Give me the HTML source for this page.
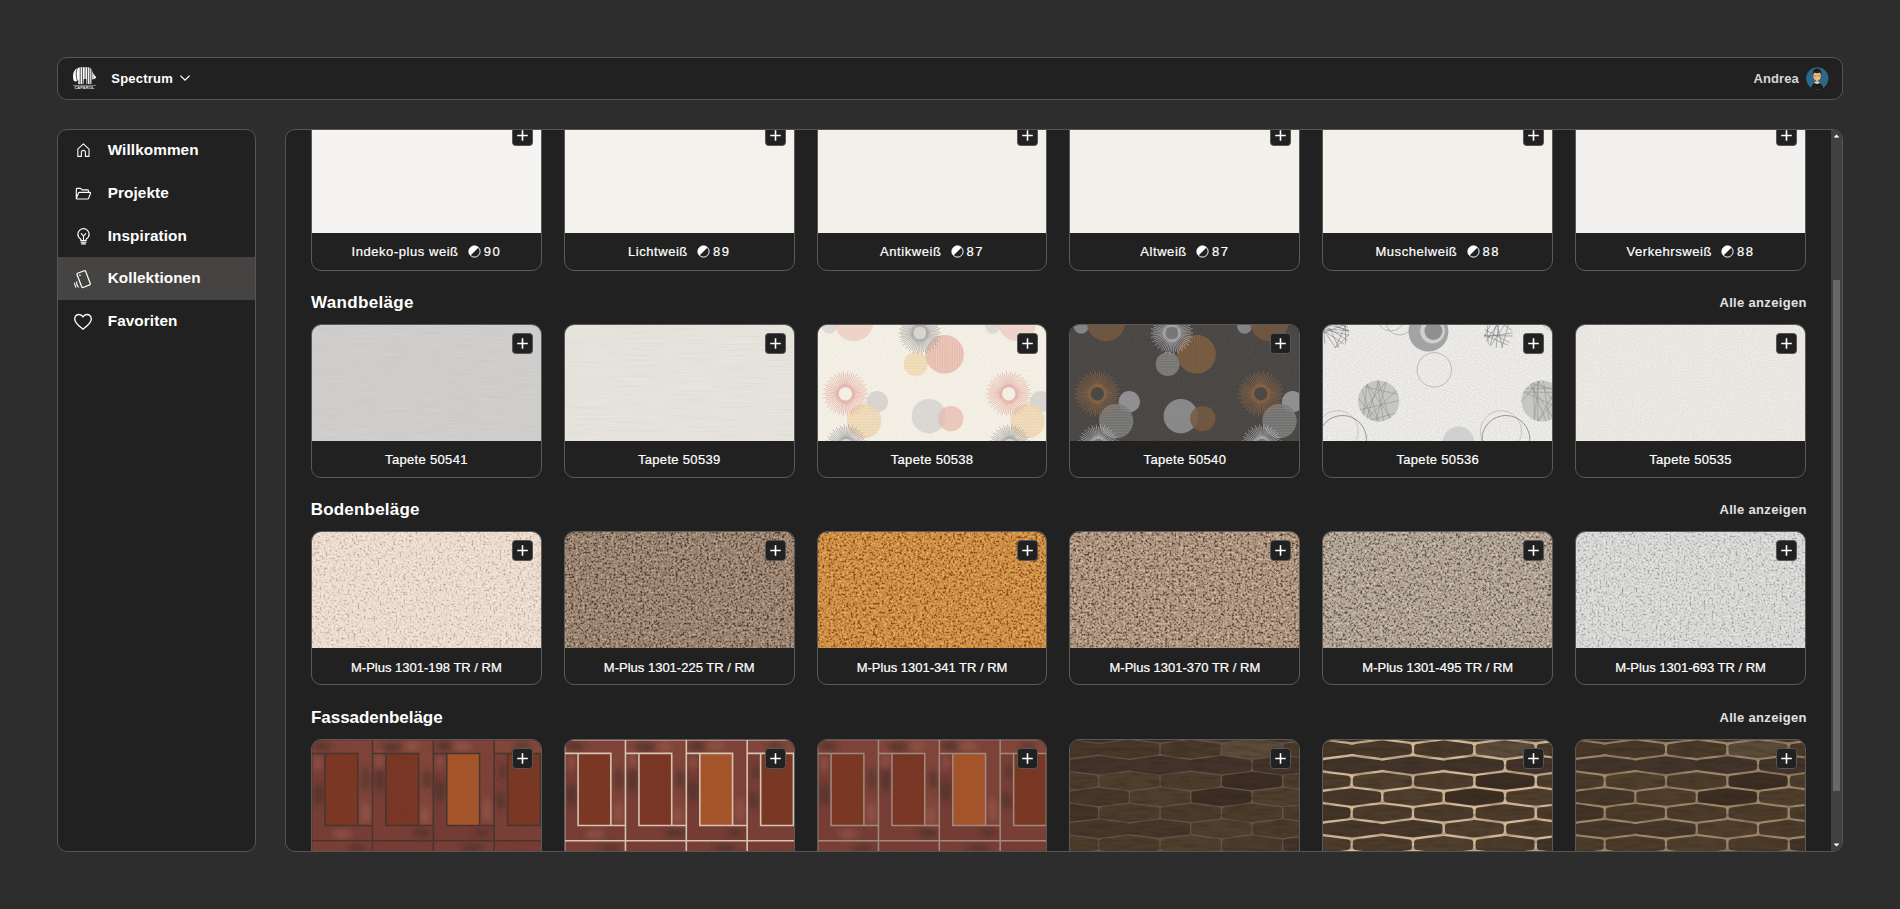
<!DOCTYPE html>
<html lang="de">
<head>
<meta charset="utf-8">
<title>Spectrum – Kollektionen</title>
<style>
html,body{margin:0;padding:0}
body{width:1900px;height:909px;overflow:hidden;background:#2d2d2d;font-family:"Liberation Sans",sans-serif;color:#fff;position:relative}
.panel{position:absolute;background:#212121;border:1px solid #555;border-radius:10px;box-sizing:border-box;overflow:hidden}
.abs{position:absolute;width:1900px;height:909px}
#hdr{left:57px;top:57px;width:1786px;height:43px}
#hdr .abs{left:-58px;top:-58px}
#side{left:57px;top:129px;width:199px;height:723px}
#side .abs{left:-58px;top:-130px}
#main{left:285px;top:129px;width:1558px;height:723px}
#main .abs{left:-286px;top:-130px}
.brand{position:absolute;left:111.3px;top:58px;height:41px;line-height:41px;font-size:13px;font-weight:bold;letter-spacing:.22px}
.chev{position:absolute;left:179px;top:74px}
.logo{position:absolute;left:72px;top:66px}
.user{position:absolute;left:1753.5px;top:58px;height:41px;line-height:41px;font-size:13px;font-weight:bold;color:#d6d6d6;letter-spacing:.1px}
.ava{position:absolute;left:1805.7px;top:66.5px}
.nav{position:absolute;left:58px;width:197px;height:42.65px;line-height:42.65px;font-size:15.3px;font-weight:bold}
.nav.sel{background:#454443;height:43.2px}
.nav span{position:absolute;left:49.7px;top:0;letter-spacing:.1px}
.nav svg{position:absolute;overflow:visible}
.sec{position:absolute;left:311px;width:1495px}
.hd{position:absolute;left:0;right:0;top:-33px;height:24px}
.hd .t{position:absolute;left:0;top:0;font-size:17px;font-weight:bold;line-height:24px;letter-spacing:.33px}
.r3 .hd .t{left:-.3px;letter-spacing:.2px}
.r4 .hd .t{letter-spacing:-.05px}
.hd .all{position:absolute;right:-.8px;top:-.4px;font-size:13px;font-weight:bold;line-height:24px;color:#e2e2e2;letter-spacing:.33px}
.cards{display:grid;grid-template-columns:repeat(6,1fr);column-gap:22px}
.card{height:154px;box-sizing:border-box;border:1px solid #5a5a5a;border-radius:10px;overflow:hidden;background:#212121;position:relative}
.card .img{height:116px;position:relative;overflow:hidden}
.card .fill{position:absolute;inset:0}
.card .tx{position:absolute;left:0;top:0;width:100%;height:100%;display:block}
.card .plus{position:absolute;right:8px;top:8px;width:21px;height:21px;box-sizing:border-box;border:1px solid #565656;background:#212121;border-radius:3.5px}
.card .plus svg{display:block}
.card .lbl{height:36px;line-height:36px;text-align:center;font-size:13px;white-space:nowrap;color:#fff;-webkit-text-stroke:.22px #fff}
.r1 .card{height:155px}
.r1 .lbl{height:37px;line-height:37.6px}
.r2 .lbl{line-height:37.2px}
.r3 .lbl{line-height:39px}
.lbl .lrv{vertical-align:-2.4px;margin:0 3px 0 9.2px}
.r1 .nm{letter-spacing:.55px}
.r1 .num{letter-spacing:1.5px}
.r2 .nm{letter-spacing:.32px}
.sb{position:absolute;left:1831px;top:130px;width:11px;height:721px;background:#424140}
.sb .th{position:absolute;left:2px;width:7px;top:150px;height:511px;background:#686868}
.sb svg{position:absolute;left:0}
</style>
</head>
<body>
<div id="hdr" class="panel"><div class="abs">
  <svg class="logo" width="26" height="24" viewBox="0 0 26 24"><defs><clipPath id="el"><path d="M1.6 14.6C.6 11 .8 6.500 3.200 3.800 5 1.800 7.500 1.300 10.500 1.300H16c2.500.2 4 2.200 4.600 5.200L24.300 11.400 22.800 12.800c-1.300.7-2.500.5-3.200.4L19.400 18.100H14.500L14.300 13H11.800L11.500 18.100H6.200L6.400 13.500C5.500 15.500 3.500 16.200 1.600 14.600Z"/></clipPath></defs><g clip-path="url(#el)"><rect x="0" y="0" width="26" height="19" fill="#fff"/><path d="M5.800 1.500C3.800 5 3.600 10 5.700 15.800M8.200 0v19M10.450 0v19M13.100 0v19M15.600 0v19M17.800 0v19M19.800 0v19" stroke="#212121" stroke-width=".8" fill="none"/><path d="M21.400 6.500v8" stroke="#212121" stroke-width=".5" opacity=".6"/></g><path d="M1 19.400h22.800" stroke="#ddd" stroke-width=".5"/><text x="12.400" y="23.100" font-family="Liberation Sans,sans-serif" font-weight="bold" font-size="3.900" text-anchor="middle" fill="#e8e8e8" letter-spacing=".15">CAPAROL</text></svg>
  <div class="brand">Spectrum</div>
  <svg class="chev" width="12" height="8" viewBox="0 0 12 8"><path d="M1.4 1.6 6 6.2l4.6-4.6" fill="none" stroke="#fff" stroke-width="1.3"/></svg>
  <div class="user">Andrea</div>
  <svg class="ava" width="23" height="23" viewBox="0 0 23 23"><defs><clipPath id="avc"><circle cx="11.300" cy="11.300" r="11.100"/></clipPath></defs><g clip-path="url(#avc)"><rect width="23" height="23" fill="#2f6789"/><g transform="translate(-.25 -1)"><path d="M5.300 23c0-4 2-6.300 6-6.300s6 2.300 6 6.300Z" fill="#231b15"/><path d="M9.400 15.800h3.800l.7 1.200-2.600 1-2.600-1Z" fill="#e9e6e2"/><rect x="10.100" y="12.500" width="2.400" height="4" fill="#e8a868"/><ellipse cx="11.300" cy="9.900" rx="3.700" ry="4.400" fill="#f1b878"/><path d="M7.100 9.300C6.300 5 8.300 2.600 11.300 2.600s5.100 2.300 4.300 6.600c-.5-1.600-1-2.300-1.500-2.600-1.800.7-3.900.7-5.500 0-.6.400-1.100 1.100-1.500 2.700Z" fill="#2a1c15"/><path d="M8.400 9.900h2.400M11.900 9.900h2.400" stroke="#8a7f77" stroke-width=".9"/></g></g></svg>
</div></div>
<div id="side" class="panel"><div class="abs">
  <div class="nav" style="top:128.8px"><svg style="left:18px;top:12.8px" width="15" height="16" viewBox="0 0 15 16"><path d="M1.8 7.1 7.4 1.800l5.6 5.300v7.3H9.400v-4.1a2 2 0 0 0-4 0v4.1H1.800Z" fill="none" stroke="#f2f2f2" stroke-width="1.15" stroke-linejoin="round"/></svg><span>Willkommen</span></div>
  <div class="nav" style="top:172.27px"><svg style="left:17px;top:15px" width="17" height="14" viewBox="0 0 17 14"><path d="M1.3 11.6V2.2a.9.9 0 0 1 .9-.9h3.3l1.5 1.6h5.6a.9.9 0 0 1 .9.9v1.6M1.3 11.6 3.5 6a.9.9 0 0 1 .85-.6h10.6a.6.6 0 0 1 .55.85L13.6 11.4a.9.9 0 0 1-.85.6H1.9a.6.6 0 0 1-.6-.4Z" fill="none" stroke="#fff" stroke-width="1.15" stroke-linejoin="round"/></svg><span>Projekte</span></div>
  <div class="nav" style="top:214.94px"><svg style="left:18px;top:12.5px" width="15" height="19" viewBox="0 0 15 19"><path d="M4.9 12.2C3 11.1 1.9 9.300 1.9 7.3a5.6 5.6 0 0 1 11.2 0c0 2-1.100 3.800-3 4.900v1.500H4.900Z" fill="none" stroke="#fff" stroke-width="1.2" stroke-linejoin="round"/><path d="M5.300 6.700 7.500 9.100l2.200-2.400M7.500 9.100v4.200M5 15.300h5M5.600 16.900h3.800" fill="none" stroke="#fff" stroke-width="1.1" stroke-linecap="round"/></svg><span>Inspiration</span></div>
  <div class="nav sel" style="top:256.6px"><svg style="left:15px;top:12px" width="20" height="21" viewBox="0 0 20 21"><g transform="rotate(-21 10.5 10.5)"><rect x="6.200" y="2.600" width="9.200" height="15.200" rx="1.100" fill="none" stroke="#fff" stroke-width="1.25"/><circle cx="8.700" cy="5.300" r=".8" fill="#fff"/></g><path d="M3.600 12.800c-.2 2 .4 3.900 1.700 5.300M1.700 14c-.1 1.500.3 2.900 1.100 4.100" fill="none" stroke="#fff" stroke-width="1.050" stroke-linecap="round"/></svg><span>Kollektionen</span></div>
  <div class="nav" style="top:300.28px"><svg style="left:15px;top:13px" width="20" height="18" viewBox="0 0 20 18"><path d="M10 16.200C7.400 14 1.700 10.300 1.700 5.900A4.300 4.300 0 0 1 6 1.500c1.700 0 3.100.9 4 2.400.9-1.500 2.300-2.400 4-2.400a4.300 4.300 0 0 1 4.300 4.400c0 4.400-5.700 8.100-8.300 10.300Z" fill="none" stroke="#fff" stroke-width="1.350" stroke-linejoin="round"/></svg><span>Favoriten</span></div>
</div></div>
<div id="main" class="panel"><div class="abs">
<div class="sec r1" style="top:116px"><div class="cards"><div class="card "><div class="img"><div class="fill" style="background:#f5f4f2"></div><div class="plus"><svg width="19" height="19" viewBox="0 0 19 19"><path d="M9.5 4.2v10.6M4.2 9.5h10.600" stroke="#fff" stroke-width="1.600" fill="none"/></svg></div></div><div class="lbl"><span class="nm">Indeko-plus weiß</span><svg class="lrv" width="13" height="13" viewBox="0 0 13 13"><circle cx="6.5" cy="6.5" r="5.600" fill="none" stroke="#fff" stroke-width="1"/><path d="M2.500 10.500A5.600 5.600 0 0 1 10.500 2.500Z" fill="#fff"/></svg><span class="num">90</span></div></div><div class="card "><div class="img"><div class="fill" style="background:#f5f2ed"></div><div class="plus"><svg width="19" height="19" viewBox="0 0 19 19"><path d="M9.5 4.2v10.6M4.2 9.5h10.600" stroke="#fff" stroke-width="1.600" fill="none"/></svg></div></div><div class="lbl"><span class="nm">Lichtweiß</span><svg class="lrv" width="13" height="13" viewBox="0 0 13 13"><circle cx="6.5" cy="6.5" r="5.600" fill="none" stroke="#fff" stroke-width="1"/><path d="M2.500 10.500A5.600 5.600 0 0 1 10.500 2.500Z" fill="#fff"/></svg><span class="num">89</span></div></div><div class="card "><div class="img"><div class="fill" style="background:#f3efe9"></div><div class="plus"><svg width="19" height="19" viewBox="0 0 19 19"><path d="M9.5 4.2v10.6M4.2 9.5h10.600" stroke="#fff" stroke-width="1.600" fill="none"/></svg></div></div><div class="lbl"><span class="nm">Antikweiß</span><svg class="lrv" width="13" height="13" viewBox="0 0 13 13"><circle cx="6.5" cy="6.5" r="5.600" fill="none" stroke="#fff" stroke-width="1"/><path d="M2.500 10.500A5.600 5.600 0 0 1 10.500 2.500Z" fill="#fff"/></svg><span class="num">87</span></div></div><div class="card "><div class="img"><div class="fill" style="background:#f3efe9"></div><div class="plus"><svg width="19" height="19" viewBox="0 0 19 19"><path d="M9.5 4.2v10.6M4.2 9.5h10.600" stroke="#fff" stroke-width="1.600" fill="none"/></svg></div></div><div class="lbl"><span class="nm">Altweiß</span><svg class="lrv" width="13" height="13" viewBox="0 0 13 13"><circle cx="6.5" cy="6.5" r="5.600" fill="none" stroke="#fff" stroke-width="1"/><path d="M2.500 10.500A5.600 5.600 0 0 1 10.500 2.500Z" fill="#fff"/></svg><span class="num">87</span></div></div><div class="card "><div class="img"><div class="fill" style="background:#f3f0ea"></div><div class="plus"><svg width="19" height="19" viewBox="0 0 19 19"><path d="M9.5 4.2v10.6M4.2 9.5h10.600" stroke="#fff" stroke-width="1.600" fill="none"/></svg></div></div><div class="lbl"><span class="nm">Muschelweiß</span><svg class="lrv" width="13" height="13" viewBox="0 0 13 13"><circle cx="6.5" cy="6.5" r="5.600" fill="none" stroke="#fff" stroke-width="1"/><path d="M2.500 10.500A5.600 5.600 0 0 1 10.500 2.500Z" fill="#fff"/></svg><span class="num">88</span></div></div><div class="card "><div class="img"><div class="fill" style="background:#f1f0ee"></div><div class="plus"><svg width="19" height="19" viewBox="0 0 19 19"><path d="M9.5 4.2v10.6M4.2 9.5h10.600" stroke="#fff" stroke-width="1.600" fill="none"/></svg></div></div><div class="lbl"><span class="nm">Verkehrsweiß</span><svg class="lrv" width="13" height="13" viewBox="0 0 13 13"><circle cx="6.5" cy="6.5" r="5.600" fill="none" stroke="#fff" stroke-width="1"/><path d="M2.500 10.500A5.600 5.600 0 0 1 10.500 2.500Z" fill="#fff"/></svg><span class="num">88</span></div></div></div></div>
<div class="sec r2" style="top:324px"><div class="hd"><span class="t">Wandbeläge</span><span class="all">Alle anzeigen</span></div><div class="cards"><div class="card "><div class="img"><svg class="tx" viewBox="0 0 229 116" preserveAspectRatio="none"><defs><filter id="w1" x="0" y="0" width="100%" height="100%" color-interpolation-filters="sRGB"><feTurbulence type="fractalNoise" baseFrequency="0.03 0.9" numOctaves="2" seed="4"/><feColorMatrix type="matrix" values="1 0 0 0 0 1 0 0 0 0 1 0 0 0 0 0 0 0 0 1"/><feComponentTransfer><feFuncR type="table" tableValues="0.796 0.796 0.796 0.796 0.797 0.799 0.802 0.806 0.809 0.811 0.812 0.812 0.814 0.816 0.819 0.821 0.823 0.824 0.824 0.824 0.824"/><feFuncG type="table" tableValues="0.792 0.792 0.792 0.792 0.793 0.795 0.798 0.802 0.805 0.807 0.808 0.808 0.810 0.812 0.815 0.817 0.819 0.820 0.820 0.820 0.820"/><feFuncB type="table" tableValues="0.784 0.784 0.784 0.784 0.785 0.787 0.790 0.794 0.797 0.799 0.800 0.801 0.802 0.805 0.807 0.809 0.811 0.812 0.812 0.812 0.812"/></feComponentTransfer></filter></defs><rect width="229" height="116" filter="url(#w1)"/></svg><div class="plus"><svg width="19" height="19" viewBox="0 0 19 19"><path d="M9.5 4.2v10.6M4.2 9.5h10.600" stroke="#fff" stroke-width="1.600" fill="none"/></svg></div></div><div class="lbl"><span class="nm">Tapete 50541</span></div></div><div class="card "><div class="img"><svg class="tx" viewBox="0 0 229 116" preserveAspectRatio="none"><defs><filter id="w2" x="0" y="0" width="100%" height="100%" color-interpolation-filters="sRGB"><feTurbulence type="fractalNoise" baseFrequency="0.02 0.8" numOctaves="2" seed="7"/><feColorMatrix type="matrix" values="1 0 0 0 0 1 0 0 0 0 1 0 0 0 0 0 0 0 0 1"/><feComponentTransfer><feFuncR type="table" tableValues="0.882 0.882 0.882 0.882 0.883 0.886 0.890 0.894 0.898 0.901 0.902 0.903 0.904 0.907 0.909 0.911 0.913 0.914 0.914 0.914 0.914"/><feFuncG type="table" tableValues="0.867 0.867 0.867 0.867 0.868 0.871 0.874 0.879 0.882 0.885 0.886 0.887 0.889 0.892 0.896 0.899 0.901 0.902 0.902 0.902 0.902"/><feFuncB type="table" tableValues="0.839 0.839 0.839 0.839 0.841 0.844 0.848 0.853 0.858 0.861 0.863 0.864 0.866 0.869 0.872 0.875 0.878 0.878 0.878 0.878 0.878"/></feComponentTransfer></filter></defs><rect width="229" height="116" filter="url(#w2)"/></svg><div class="plus"><svg width="19" height="19" viewBox="0 0 19 19"><path d="M9.5 4.2v10.6M4.2 9.5h10.600" stroke="#fff" stroke-width="1.600" fill="none"/></svg></div></div><div class="lbl"><span class="nm">Tapete 50539</span></div></div><div class="card "><div class="img"><svg class="tx" viewBox="0 0 229 116" preserveAspectRatio="none"><defs><pattern id="sbav" width="1.7" height="4" patternUnits="userSpaceOnUse"><rect width=".55" height="4" fill="#d99a88"/></pattern><pattern id="sbah" width="4" height="1.6" patternUnits="userSpaceOnUse"><rect width="4" height=".5" fill="#e3c08a"/></pattern><filter id="w3" x="0" y="0" width="100%" height="100%" color-interpolation-filters="sRGB"><feTurbulence type="fractalNoise" baseFrequency="0.5 0.9" numOctaves="1" seed="2"/><feColorMatrix type="matrix" values="1 0 0 0 0 1 0 0 0 0 1 0 0 0 0 0 0 0 0 1"/><feComponentTransfer><feFuncR type="table" tableValues="0.933 0.933 0.933 0.933 0.933 0.935 0.938 0.943 0.948 0.951 0.953 0.954 0.957 0.961 0.965 0.967 0.969 0.969 0.969 0.969 0.969"/><feFuncG type="table" tableValues="0.914 0.914 0.914 0.914 0.914 0.915 0.920 0.925 0.931 0.936 0.937 0.939 0.942 0.947 0.952 0.955 0.957 0.957 0.957 0.957 0.957"/><feFuncB type="table" tableValues="0.867 0.867 0.867 0.867 0.867 0.869 0.874 0.880 0.887 0.892 0.894 0.896 0.900 0.906 0.912 0.916 0.918 0.918 0.918 0.918 0.918"/></feComponentTransfer></filter></defs><rect width="229" height="116" filter="url(#w3)"/><circle cx="11.2" cy="1.2" r="7.5" fill="#d9d5d2" opacity="0.85"/><circle cx="35.9" cy="-3.1" r="19.3" fill="#ebc8bd" opacity="0.7"/><circle cx="97.8" cy="38.9" r="12" fill="#f1dcb8" opacity="0.8"/><circle cx="97.8" cy="38.9" r="12" fill="url(#sbah)" opacity=".5"/><circle cx="126.7" cy="29.3" r="19.3" fill="#e8bbac" opacity="0.7"/><circle cx="126.7" cy="29.3" r="19.3" fill="url(#sbav)" opacity=".55"/><g opacity="0.9"><circle cx="101.9" cy="8" r="9.5" fill="#8a8b92" opacity=".3"/><path d="M108.1 8.0L123.2 8.0M108.1 8.6L121.0 10.0M108.0 9.3L122.7 12.4M107.8 9.9L120.1 13.9M107.6 10.5L121.4 16.7M107.3 11.1L118.5 17.6M106.9 11.6L119.1 20.5M106.5 12.1L116.1 20.8M106.0 12.6L116.2 23.8M105.5 13.0L113.2 23.5M105.0 13.4L112.6 26.4M104.4 13.7L109.7 25.5M103.8 13.9L108.5 28.3M103.2 14.1L105.9 26.8M102.5 14.2L104.1 29.2M101.9 14.2L101.9 27.2M101.3 14.2L99.7 29.2M100.6 14.1L97.9 26.8M100.0 13.9L95.3 28.3M99.4 13.7L94.1 25.5M98.8 13.4L91.3 26.4M98.3 13.0L90.6 23.5M97.8 12.6L87.6 23.8M97.3 12.1L87.7 20.8M96.9 11.6L84.7 20.5M96.5 11.1L85.3 17.6M96.2 10.5L82.4 16.7M96.0 9.9L83.7 13.9M95.8 9.3L81.1 12.4M95.7 8.6L82.8 10.0M95.7 8.0L80.6 8.0M95.7 7.4L82.8 6.0M95.8 6.7L81.1 3.6M96.0 6.1L83.7 2.1M96.2 5.5L82.4 -0.7M96.5 4.9L85.3 -1.6M96.9 4.4L84.7 -4.5M97.3 3.9L87.7 -4.8M97.8 3.4L87.6 -7.8M98.3 3.0L90.6 -7.5M98.8 2.6L91.2 -10.4M99.4 2.3L94.1 -9.5M100.0 2.1L95.3 -12.3M100.6 1.9L97.9 -10.8M101.3 1.8L99.7 -13.2M101.9 1.8L101.9 -11.2M102.5 1.8L104.1 -13.2M103.2 1.9L105.9 -10.8M103.8 2.1L108.5 -12.3M104.4 2.3L109.7 -9.5M105.0 2.6L112.6 -10.4M105.5 3.0L113.2 -7.5M106.0 3.4L116.2 -7.8M106.5 3.9L116.1 -4.8M106.9 4.4L119.1 -4.5M107.3 4.9L118.5 -1.6M107.6 5.5L121.4 -0.7M107.8 6.1L120.1 2.1M108.0 6.7L122.7 3.6M108.1 7.4L121.0 6.0" stroke="#8a8b92" stroke-width=".58" fill="none"/></g><circle cx="101.9" cy="8" r="6.2" fill="#d8d4d0"/><circle cx="59.3" cy="76.7" r="10.7" fill="#d3cfcc" opacity="0.85"/><circle cx="46.2" cy="96" r="17.2" fill="#f0d9b8" opacity="0.8"/><circle cx="46.2" cy="96" r="17.2" fill="url(#sbah)" opacity=".5"/><g opacity="0.9"><circle cx="27.4" cy="68.8" r="9.9" fill="#df958d" opacity=".3"/><path d="M34.0 68.8L50.1 68.8M34.0 69.5L47.7 70.9M33.9 70.2L49.6 73.5M33.7 70.8L46.8 75.1M33.4 71.5L48.1 78.0M33.1 72.1L45.1 79.0M32.7 72.7L45.8 82.1M32.3 73.2L42.6 82.5M31.8 73.7L42.6 85.7M31.3 74.1L39.4 85.3M30.7 74.5L38.8 88.5M30.1 74.8L35.7 87.5M29.4 75.1L34.4 90.4M28.8 75.3L31.6 88.8M28.1 75.4L29.8 91.4M27.4 75.4L27.4 89.2M26.7 75.4L25.0 91.4M26.0 75.3L23.2 88.8M25.4 75.1L20.4 90.4M24.7 74.8L19.1 87.5M24.1 74.5L16.1 88.5M23.5 74.1L15.4 85.3M23.0 73.7L12.2 85.7M22.5 73.2L12.2 82.5M22.1 72.7L9.0 82.1M21.7 72.1L9.7 79.0M21.4 71.5L6.7 78.0M21.1 70.8L8.0 75.1M20.9 70.2L5.2 73.5M20.8 69.5L7.1 70.9M20.8 68.8L4.7 68.8M20.8 68.1L7.1 66.7M20.9 67.4L5.2 64.1M21.1 66.8L8.0 62.5M21.4 66.1L6.7 59.6M21.7 65.5L9.7 58.6M22.1 64.9L9.0 55.5M22.5 64.4L12.2 55.1M23.0 63.9L12.2 51.9M23.5 63.5L15.4 52.3M24.1 63.1L16.0 49.1M24.7 62.8L19.1 50.1M25.4 62.5L20.4 47.2M26.0 62.3L23.2 48.8M26.7 62.2L25.0 46.2M27.4 62.2L27.4 48.4M28.1 62.2L29.8 46.2M28.8 62.3L31.6 48.8M29.4 62.5L34.4 47.2M30.1 62.8L35.7 50.1M30.7 63.1L38.8 49.1M31.3 63.5L39.4 52.3M31.8 63.9L42.6 51.9M32.3 64.4L42.6 55.1M32.7 64.9L45.8 55.5M33.1 65.5L45.1 58.6M33.4 66.1L48.1 59.6M33.7 66.8L46.8 62.5M33.9 67.4L49.6 64.1M34.0 68.1L47.7 66.7" stroke="#df958d" stroke-width=".58" fill="none"/></g><circle cx="27.4" cy="68.8" r="6.6" fill="#f3efe4"/><circle cx="110.9" cy="91.2" r="17.2" fill="#d6d2cf" opacity="0.85"/><circle cx="132.9" cy="93.6" r="12.7" fill="#e7b8aa" opacity="0.7"/><g opacity="0.9"><circle cx="28.4" cy="120" r="9.3" fill="#8a8b92" opacity=".3"/><path d="M34.4 120.0L49.0 120.0M34.4 120.6L46.8 121.9M34.3 121.2L48.5 124.3M34.1 121.9L46.0 125.7M33.9 122.4L47.2 128.4M33.6 123.0L44.5 129.3M33.3 123.5L45.1 132.1M32.9 124.0L42.2 132.4M32.4 124.5L42.2 135.3M31.9 124.9L39.3 135.0M31.4 125.2L38.7 137.8M30.8 125.5L35.9 136.9M30.3 125.7L34.8 139.6M29.6 125.9L32.3 138.1M29.0 126.0L30.6 140.5M28.4 126.0L28.4 138.5M27.8 126.0L26.2 140.5M27.2 125.9L24.5 138.1M26.5 125.7L22.0 139.6M26.0 125.5L20.9 136.9M25.4 125.2L18.1 137.8M24.9 124.9L17.5 135.0M24.4 124.5L14.6 135.3M23.9 124.0L14.6 132.4M23.5 123.5L11.7 132.1M23.2 123.0L12.3 129.3M22.9 122.4L9.6 128.4M22.7 121.9L10.8 125.7M22.5 121.2L8.3 124.3M22.4 120.6L10.0 121.9M22.4 120.0L7.8 120.0M22.4 119.4L10.0 118.1M22.5 118.8L8.3 115.7M22.7 118.1L10.8 114.3M22.9 117.6L9.6 111.6M23.2 117.0L12.3 110.7M23.5 116.5L11.7 107.9M23.9 116.0L14.6 107.6M24.4 115.5L14.6 104.7M24.9 115.1L17.5 105.0M25.4 114.8L18.1 102.2M26.0 114.5L20.9 103.1M26.5 114.3L22.0 100.4M27.2 114.1L24.5 101.9M27.8 114.0L26.2 99.5M28.4 114.0L28.4 101.5M29.0 114.0L30.6 99.5M29.6 114.1L32.3 101.9M30.3 114.3L34.8 100.4M30.8 114.5L35.9 103.1M31.4 114.8L38.7 102.2M31.9 115.1L39.3 105.0M32.4 115.5L42.2 104.7M32.9 116.0L42.2 107.6M33.3 116.5L45.1 107.9M33.6 117.0L44.5 110.7M33.9 117.6L47.2 111.6M34.1 118.1L46.0 114.3M34.3 118.8L48.5 115.7M34.4 119.4L46.8 118.1" stroke="#8a8b92" stroke-width=".58" fill="none"/></g><circle cx="28.4" cy="120" r="6.0" fill="#d8d4d0"/><circle cx="174.7" cy="1.2" r="7.5" fill="#d9d5d2" opacity="0.85"/><circle cx="199.4" cy="-3.1" r="19.3" fill="#ebc8bd" opacity="0.7"/><circle cx="261.3" cy="38.9" r="12" fill="#f1dcb8" opacity="0.8"/><circle cx="261.3" cy="38.9" r="12" fill="url(#sbah)" opacity=".5"/><circle cx="290.2" cy="29.3" r="19.3" fill="#e8bbac" opacity="0.7"/><circle cx="290.2" cy="29.3" r="19.3" fill="url(#sbav)" opacity=".55"/><g opacity="0.9"><circle cx="265.4" cy="8" r="9.5" fill="#8a8b92" opacity=".3"/><path d="M271.6 8.0L286.7 8.0M271.6 8.6L284.5 10.0M271.5 9.3L286.2 12.4M271.3 9.9L283.6 13.9M271.1 10.5L284.9 16.7M270.8 11.1L282.0 17.6M270.4 11.6L282.6 20.5M270.0 12.1L279.6 20.8M269.5 12.6L279.7 23.8M269.0 13.0L276.7 23.5M268.5 13.4L276.0 26.4M267.9 13.7L273.2 25.5M267.3 13.9L272.0 28.3M266.7 14.1L269.4 26.8M266.0 14.2L267.6 29.2M265.4 14.2L265.4 27.2M264.8 14.2L263.2 29.2M264.1 14.1L261.4 26.8M263.5 13.9L258.8 28.3M262.9 13.7L257.6 25.5M262.3 13.4L254.7 26.4M261.8 13.0L254.1 23.5M261.3 12.6L251.1 23.8M260.8 12.1L251.2 20.8M260.4 11.6L248.2 20.5M260.0 11.1L248.8 17.6M259.7 10.5L245.9 16.7M259.5 9.9L247.2 13.9M259.3 9.3L244.6 12.4M259.2 8.6L246.3 10.0M259.2 8.0L244.1 8.0M259.2 7.4L246.3 6.0M259.3 6.7L244.6 3.6M259.5 6.1L247.2 2.1M259.7 5.5L245.9 -0.7M260.0 4.9L248.8 -1.6M260.4 4.4L248.2 -4.5M260.8 3.9L251.2 -4.8M261.3 3.4L251.1 -7.8M261.8 3.0L254.1 -7.5M262.3 2.6L254.7 -10.4M262.9 2.3L257.6 -9.5M263.5 2.1L258.8 -12.3M264.1 1.9L261.4 -10.8M264.8 1.8L263.2 -13.2M265.4 1.8L265.4 -11.2M266.0 1.8L267.6 -13.2M266.7 1.9L269.4 -10.8M267.3 2.1L272.0 -12.3M267.9 2.3L273.2 -9.5M268.5 2.6L276.0 -10.4M269.0 3.0L276.7 -7.5M269.5 3.4L279.7 -7.8M270.0 3.9L279.6 -4.8M270.4 4.4L282.6 -4.5M270.8 4.9L282.0 -1.6M271.1 5.5L284.9 -0.7M271.3 6.1L283.6 2.1M271.5 6.7L286.2 3.6M271.6 7.4L284.5 6.0" stroke="#8a8b92" stroke-width=".58" fill="none"/></g><circle cx="265.4" cy="8" r="6.2" fill="#d8d4d0"/><circle cx="222.8" cy="76.7" r="10.7" fill="#d3cfcc" opacity="0.85"/><circle cx="209.7" cy="96" r="17.2" fill="#f0d9b8" opacity="0.8"/><circle cx="209.7" cy="96" r="17.2" fill="url(#sbah)" opacity=".5"/><g opacity="0.9"><circle cx="190.9" cy="68.8" r="9.9" fill="#df958d" opacity=".3"/><path d="M197.5 68.8L213.6 68.8M197.5 69.5L211.2 70.9M197.4 70.2L213.1 73.5M197.2 70.8L210.3 75.1M196.9 71.5L211.6 78.0M196.6 72.1L208.6 79.0M196.2 72.7L209.3 82.1M195.8 73.2L206.1 82.5M195.3 73.7L206.1 85.7M194.8 74.1L202.9 85.3M194.2 74.5L202.2 88.5M193.6 74.8L199.2 87.5M192.9 75.1L197.9 90.4M192.3 75.3L195.1 88.8M191.6 75.4L193.3 91.4M190.9 75.4L190.9 89.2M190.2 75.4L188.5 91.4M189.5 75.3L186.7 88.8M188.9 75.1L183.9 90.4M188.2 74.8L182.6 87.5M187.6 74.5L179.6 88.5M187.0 74.1L178.9 85.3M186.5 73.7L175.7 85.7M186.0 73.2L175.7 82.5M185.6 72.7L172.5 82.1M185.2 72.1L173.2 79.0M184.9 71.5L170.2 78.0M184.6 70.8L171.5 75.1M184.4 70.2L168.7 73.5M184.3 69.5L170.6 70.9M184.3 68.8L168.2 68.8M184.3 68.1L170.6 66.7M184.4 67.4L168.7 64.1M184.6 66.8L171.5 62.5M184.9 66.1L170.2 59.6M185.2 65.5L173.2 58.6M185.6 64.9L172.5 55.5M186.0 64.4L175.7 55.1M186.5 63.9L175.7 51.9M187.0 63.5L178.9 52.3M187.6 63.1L179.5 49.1M188.2 62.8L182.6 50.1M188.9 62.5L183.9 47.2M189.5 62.3L186.7 48.8M190.2 62.2L188.5 46.2M190.9 62.2L190.9 48.4M191.6 62.2L193.3 46.2M192.3 62.3L195.1 48.8M192.9 62.5L197.9 47.2M193.6 62.8L199.2 50.1M194.2 63.1L202.2 49.1M194.8 63.5L202.9 52.3M195.3 63.9L206.1 51.9M195.8 64.4L206.1 55.1M196.2 64.9L209.3 55.5M196.6 65.5L208.6 58.6M196.9 66.1L211.6 59.6M197.2 66.8L210.3 62.5M197.4 67.4L213.1 64.1M197.5 68.1L211.2 66.7" stroke="#df958d" stroke-width=".58" fill="none"/></g><circle cx="190.9" cy="68.8" r="6.6" fill="#f3efe4"/><circle cx="274.4" cy="91.2" r="17.2" fill="#d6d2cf" opacity="0.85"/><circle cx="296.4" cy="93.6" r="12.7" fill="#e7b8aa" opacity="0.7"/><g opacity="0.9"><circle cx="191.9" cy="120" r="9.3" fill="#8a8b92" opacity=".3"/><path d="M197.9 120.0L212.5 120.0M197.9 120.6L210.3 121.9M197.8 121.2L212.0 124.3M197.6 121.9L209.5 125.7M197.4 122.4L210.7 128.4M197.1 123.0L208.0 129.3M196.8 123.5L208.6 132.1M196.4 124.0L205.7 132.4M195.9 124.5L205.7 135.3M195.4 124.9L202.8 135.0M194.9 125.2L202.2 137.8M194.3 125.5L199.4 136.9M193.8 125.7L198.3 139.6M193.1 125.9L195.8 138.1M192.5 126.0L194.1 140.5M191.9 126.0L191.9 138.5M191.3 126.0L189.7 140.5M190.7 125.9L188.0 138.1M190.0 125.7L185.5 139.6M189.5 125.5L184.4 136.9M188.9 125.2L181.6 137.8M188.4 124.9L181.0 135.0M187.9 124.5L178.1 135.3M187.4 124.0L178.1 132.4M187.0 123.5L175.2 132.1M186.7 123.0L175.8 129.3M186.4 122.4L173.1 128.4M186.2 121.9L174.3 125.7M186.0 121.2L171.8 124.3M185.9 120.6L173.5 121.9M185.9 120.0L171.3 120.0M185.9 119.4L173.5 118.1M186.0 118.8L171.8 115.7M186.2 118.1L174.3 114.3M186.4 117.6L173.1 111.6M186.7 117.0L175.8 110.7M187.0 116.5L175.2 107.9M187.4 116.0L178.1 107.6M187.9 115.5L178.1 104.7M188.4 115.1L181.0 105.0M188.9 114.8L181.6 102.2M189.5 114.5L184.4 103.1M190.0 114.3L185.5 100.4M190.7 114.1L188.0 101.9M191.3 114.0L189.7 99.5M191.9 114.0L191.9 101.5M192.5 114.0L194.1 99.5M193.1 114.1L195.8 101.9M193.8 114.3L198.3 100.4M194.3 114.5L199.4 103.1M194.9 114.8L202.2 102.2M195.4 115.1L202.8 105.0M195.9 115.5L205.7 104.7M196.4 116.0L205.7 107.6M196.8 116.5L208.6 107.9M197.1 117.0L208.0 110.7M197.4 117.6L210.7 111.6M197.6 118.1L209.5 114.3M197.8 118.8L212.0 115.7M197.9 119.4L210.3 118.1" stroke="#8a8b92" stroke-width=".58" fill="none"/></g><circle cx="191.9" cy="120" r="6.0" fill="#d8d4d0"/></svg><div class="plus"><svg width="19" height="19" viewBox="0 0 19 19"><path d="M9.5 4.2v10.6M4.2 9.5h10.600" stroke="#fff" stroke-width="1.600" fill="none"/></svg></div></div><div class="lbl"><span class="nm">Tapete 50538</span></div></div><div class="card "><div class="img"><svg class="tx" viewBox="0 0 229 116" preserveAspectRatio="none"><defs><pattern id="sbbv" width="1.7" height="4" patternUnits="userSpaceOnUse"><rect width=".55" height="4" fill="#9a7048"/></pattern><pattern id="sbbh" width="4" height="1.6" patternUnits="userSpaceOnUse"><rect width="4" height=".5" fill="#a0a09e"/></pattern><filter id="w4" x="0" y="0" width="100%" height="100%" color-interpolation-filters="sRGB"><feTurbulence type="fractalNoise" baseFrequency="0.6 0.9" numOctaves="1" seed="5"/><feColorMatrix type="matrix" values="1 0 0 0 0 1 0 0 0 0 1 0 0 0 0 0 0 0 0 1"/><feComponentTransfer><feFuncR type="table" tableValues="0.271 0.271 0.271 0.271 0.271 0.272 0.277 0.282 0.288 0.292 0.294 0.296 0.300 0.306 0.312 0.316 0.318 0.318 0.318 0.318 0.318"/><feFuncG type="table" tableValues="0.259 0.259 0.259 0.259 0.259 0.261 0.265 0.271 0.276 0.281 0.282 0.284 0.288 0.294 0.300 0.304 0.306 0.306 0.306 0.306 0.306"/><feFuncB type="table" tableValues="0.251 0.251 0.251 0.251 0.251 0.253 0.257 0.263 0.268 0.273 0.275 0.276 0.281 0.286 0.292 0.296 0.298 0.298 0.298 0.298 0.298"/></feComponentTransfer></filter></defs><rect width="229" height="116" filter="url(#w4)"/><circle cx="11.2" cy="1.2" r="7.5" fill="#8e8e90" opacity="0.85"/><circle cx="35.9" cy="-3.1" r="19.3" fill="#74593f" opacity="0.85"/><circle cx="97.8" cy="38.9" r="12" fill="#7b7b79" opacity="0.85"/><circle cx="97.8" cy="38.9" r="12" fill="url(#sbbh)" opacity=".5"/><circle cx="126.7" cy="29.3" r="19.3" fill="#775a40" opacity="0.85"/><circle cx="126.7" cy="29.3" r="19.3" fill="url(#sbbv)" opacity=".55"/><g opacity="0.9"><circle cx="101.9" cy="8" r="9.5" fill="#d4d5da" opacity=".3"/><path d="M108.1 8.0L123.2 8.0M108.1 8.6L121.0 10.0M108.0 9.3L122.7 12.4M107.8 9.9L120.1 13.9M107.6 10.5L121.4 16.7M107.3 11.1L118.5 17.6M106.9 11.6L119.1 20.5M106.5 12.1L116.1 20.8M106.0 12.6L116.2 23.8M105.5 13.0L113.2 23.5M105.0 13.4L112.6 26.4M104.4 13.7L109.7 25.5M103.8 13.9L108.5 28.3M103.2 14.1L105.9 26.8M102.5 14.2L104.1 29.2M101.9 14.2L101.9 27.2M101.3 14.2L99.7 29.2M100.6 14.1L97.9 26.8M100.0 13.9L95.3 28.3M99.4 13.7L94.1 25.5M98.8 13.4L91.3 26.4M98.3 13.0L90.6 23.5M97.8 12.6L87.6 23.8M97.3 12.1L87.7 20.8M96.9 11.6L84.7 20.5M96.5 11.1L85.3 17.6M96.2 10.5L82.4 16.7M96.0 9.9L83.7 13.9M95.8 9.3L81.1 12.4M95.7 8.6L82.8 10.0M95.7 8.0L80.6 8.0M95.7 7.4L82.8 6.0M95.8 6.7L81.1 3.6M96.0 6.1L83.7 2.1M96.2 5.5L82.4 -0.7M96.5 4.9L85.3 -1.6M96.9 4.4L84.7 -4.5M97.3 3.9L87.7 -4.8M97.8 3.4L87.6 -7.8M98.3 3.0L90.6 -7.5M98.8 2.6L91.2 -10.4M99.4 2.3L94.1 -9.5M100.0 2.1L95.3 -12.3M100.6 1.9L97.9 -10.8M101.3 1.8L99.7 -13.2M101.9 1.8L101.9 -11.2M102.5 1.8L104.1 -13.2M103.2 1.9L105.9 -10.8M103.8 2.1L108.5 -12.3M104.4 2.3L109.7 -9.5M105.0 2.6L112.6 -10.4M105.5 3.0L113.2 -7.5M106.0 3.4L116.2 -7.8M106.5 3.9L116.1 -4.8M106.9 4.4L119.1 -4.5M107.3 4.9L118.5 -1.6M107.6 5.5L121.4 -0.7M107.8 6.1L120.1 2.1M108.0 6.7L122.7 3.6M108.1 7.4L121.0 6.0" stroke="#d4d5da" stroke-width=".58" fill="none"/></g><circle cx="101.9" cy="8" r="6.2" fill="#77777a"/><circle cx="59.3" cy="76.7" r="10.7" fill="#9c9c9f" opacity="0.85"/><circle cx="46.2" cy="96" r="17.2" fill="#777775" opacity="0.85"/><circle cx="46.2" cy="96" r="17.2" fill="url(#sbbh)" opacity=".5"/><g opacity="0.9"><circle cx="27.4" cy="68.8" r="9.9" fill="#a87243" opacity=".3"/><path d="M34.0 68.8L50.1 68.8M34.0 69.5L47.7 70.9M33.9 70.2L49.6 73.5M33.7 70.8L46.8 75.1M33.4 71.5L48.1 78.0M33.1 72.1L45.1 79.0M32.7 72.7L45.8 82.1M32.3 73.2L42.6 82.5M31.8 73.7L42.6 85.7M31.3 74.1L39.4 85.3M30.7 74.5L38.8 88.5M30.1 74.8L35.7 87.5M29.4 75.1L34.4 90.4M28.8 75.3L31.6 88.8M28.1 75.4L29.8 91.4M27.4 75.4L27.4 89.2M26.7 75.4L25.0 91.4M26.0 75.3L23.2 88.8M25.4 75.1L20.4 90.4M24.7 74.8L19.1 87.5M24.1 74.5L16.1 88.5M23.5 74.1L15.4 85.3M23.0 73.7L12.2 85.7M22.5 73.2L12.2 82.5M22.1 72.7L9.0 82.1M21.7 72.1L9.7 79.0M21.4 71.5L6.7 78.0M21.1 70.8L8.0 75.1M20.9 70.2L5.2 73.5M20.8 69.5L7.1 70.9M20.8 68.8L4.7 68.8M20.8 68.1L7.1 66.7M20.9 67.4L5.2 64.1M21.1 66.8L8.0 62.5M21.4 66.1L6.7 59.6M21.7 65.5L9.7 58.6M22.1 64.9L9.0 55.5M22.5 64.4L12.2 55.1M23.0 63.9L12.2 51.9M23.5 63.5L15.4 52.3M24.1 63.1L16.0 49.1M24.7 62.8L19.1 50.1M25.4 62.5L20.4 47.2M26.0 62.3L23.2 48.8M26.7 62.2L25.0 46.2M27.4 62.2L27.4 48.4M28.1 62.2L29.8 46.2M28.8 62.3L31.6 48.8M29.4 62.5L34.4 47.2M30.1 62.8L35.7 50.1M30.7 63.1L38.8 49.1M31.3 63.5L39.4 52.3M31.8 63.9L42.6 51.9M32.3 64.4L42.6 55.1M32.7 64.9L45.8 55.5M33.1 65.5L45.1 58.6M33.4 66.1L48.1 59.6M33.7 66.8L46.8 62.5M33.9 67.4L49.6 64.1M34.0 68.1L47.7 66.7" stroke="#a87243" stroke-width=".58" fill="none"/></g><circle cx="27.4" cy="68.8" r="6.6" fill="#4b4846"/><circle cx="110.9" cy="91.2" r="17.2" fill="#949497" opacity="0.85"/><circle cx="132.9" cy="93.6" r="12.7" fill="#775a40" opacity="0.85"/><g opacity="0.9"><circle cx="28.4" cy="120" r="9.3" fill="#d4d5da" opacity=".3"/><path d="M34.4 120.0L49.0 120.0M34.4 120.6L46.8 121.9M34.3 121.2L48.5 124.3M34.1 121.9L46.0 125.7M33.9 122.4L47.2 128.4M33.6 123.0L44.5 129.3M33.3 123.5L45.1 132.1M32.9 124.0L42.2 132.4M32.4 124.5L42.2 135.3M31.9 124.9L39.3 135.0M31.4 125.2L38.7 137.8M30.8 125.5L35.9 136.9M30.3 125.7L34.8 139.6M29.6 125.9L32.3 138.1M29.0 126.0L30.6 140.5M28.4 126.0L28.4 138.5M27.8 126.0L26.2 140.5M27.2 125.9L24.5 138.1M26.5 125.7L22.0 139.6M26.0 125.5L20.9 136.9M25.4 125.2L18.1 137.8M24.9 124.9L17.5 135.0M24.4 124.5L14.6 135.3M23.9 124.0L14.6 132.4M23.5 123.5L11.7 132.1M23.2 123.0L12.3 129.3M22.9 122.4L9.6 128.4M22.7 121.9L10.8 125.7M22.5 121.2L8.3 124.3M22.4 120.6L10.0 121.9M22.4 120.0L7.8 120.0M22.4 119.4L10.0 118.1M22.5 118.8L8.3 115.7M22.7 118.1L10.8 114.3M22.9 117.6L9.6 111.6M23.2 117.0L12.3 110.7M23.5 116.5L11.7 107.9M23.9 116.0L14.6 107.6M24.4 115.5L14.6 104.7M24.9 115.1L17.5 105.0M25.4 114.8L18.1 102.2M26.0 114.5L20.9 103.1M26.5 114.3L22.0 100.4M27.2 114.1L24.5 101.9M27.8 114.0L26.2 99.5M28.4 114.0L28.4 101.5M29.0 114.0L30.6 99.5M29.6 114.1L32.3 101.9M30.3 114.3L34.8 100.4M30.8 114.5L35.9 103.1M31.4 114.8L38.7 102.2M31.9 115.1L39.3 105.0M32.4 115.5L42.2 104.7M32.9 116.0L42.2 107.6M33.3 116.5L45.1 107.9M33.6 117.0L44.5 110.7M33.9 117.6L47.2 111.6M34.1 118.1L46.0 114.3M34.3 118.8L48.5 115.7M34.4 119.4L46.8 118.1" stroke="#d4d5da" stroke-width=".58" fill="none"/></g><circle cx="28.4" cy="120" r="6.0" fill="#77777a"/><circle cx="174.7" cy="1.2" r="7.5" fill="#8e8e90" opacity="0.85"/><circle cx="199.4" cy="-3.1" r="19.3" fill="#74593f" opacity="0.85"/><circle cx="261.3" cy="38.9" r="12" fill="#7b7b79" opacity="0.85"/><circle cx="261.3" cy="38.9" r="12" fill="url(#sbbh)" opacity=".5"/><circle cx="290.2" cy="29.3" r="19.3" fill="#775a40" opacity="0.85"/><circle cx="290.2" cy="29.3" r="19.3" fill="url(#sbbv)" opacity=".55"/><g opacity="0.9"><circle cx="265.4" cy="8" r="9.5" fill="#d4d5da" opacity=".3"/><path d="M271.6 8.0L286.7 8.0M271.6 8.6L284.5 10.0M271.5 9.3L286.2 12.4M271.3 9.9L283.6 13.9M271.1 10.5L284.9 16.7M270.8 11.1L282.0 17.6M270.4 11.6L282.6 20.5M270.0 12.1L279.6 20.8M269.5 12.6L279.7 23.8M269.0 13.0L276.7 23.5M268.5 13.4L276.0 26.4M267.9 13.7L273.2 25.5M267.3 13.9L272.0 28.3M266.7 14.1L269.4 26.8M266.0 14.2L267.6 29.2M265.4 14.2L265.4 27.2M264.8 14.2L263.2 29.2M264.1 14.1L261.4 26.8M263.5 13.9L258.8 28.3M262.9 13.7L257.6 25.5M262.3 13.4L254.7 26.4M261.8 13.0L254.1 23.5M261.3 12.6L251.1 23.8M260.8 12.1L251.2 20.8M260.4 11.6L248.2 20.5M260.0 11.1L248.8 17.6M259.7 10.5L245.9 16.7M259.5 9.9L247.2 13.9M259.3 9.3L244.6 12.4M259.2 8.6L246.3 10.0M259.2 8.0L244.1 8.0M259.2 7.4L246.3 6.0M259.3 6.7L244.6 3.6M259.5 6.1L247.2 2.1M259.7 5.5L245.9 -0.7M260.0 4.9L248.8 -1.6M260.4 4.4L248.2 -4.5M260.8 3.9L251.2 -4.8M261.3 3.4L251.1 -7.8M261.8 3.0L254.1 -7.5M262.3 2.6L254.7 -10.4M262.9 2.3L257.6 -9.5M263.5 2.1L258.8 -12.3M264.1 1.9L261.4 -10.8M264.8 1.8L263.2 -13.2M265.4 1.8L265.4 -11.2M266.0 1.8L267.6 -13.2M266.7 1.9L269.4 -10.8M267.3 2.1L272.0 -12.3M267.9 2.3L273.2 -9.5M268.5 2.6L276.0 -10.4M269.0 3.0L276.7 -7.5M269.5 3.4L279.7 -7.8M270.0 3.9L279.6 -4.8M270.4 4.4L282.6 -4.5M270.8 4.9L282.0 -1.6M271.1 5.5L284.9 -0.7M271.3 6.1L283.6 2.1M271.5 6.7L286.2 3.6M271.6 7.4L284.5 6.0" stroke="#d4d5da" stroke-width=".58" fill="none"/></g><circle cx="265.4" cy="8" r="6.2" fill="#77777a"/><circle cx="222.8" cy="76.7" r="10.7" fill="#9c9c9f" opacity="0.85"/><circle cx="209.7" cy="96" r="17.2" fill="#777775" opacity="0.85"/><circle cx="209.7" cy="96" r="17.2" fill="url(#sbbh)" opacity=".5"/><g opacity="0.9"><circle cx="190.9" cy="68.8" r="9.9" fill="#a87243" opacity=".3"/><path d="M197.5 68.8L213.6 68.8M197.5 69.5L211.2 70.9M197.4 70.2L213.1 73.5M197.2 70.8L210.3 75.1M196.9 71.5L211.6 78.0M196.6 72.1L208.6 79.0M196.2 72.7L209.3 82.1M195.8 73.2L206.1 82.5M195.3 73.7L206.1 85.7M194.8 74.1L202.9 85.3M194.2 74.5L202.2 88.5M193.6 74.8L199.2 87.5M192.9 75.1L197.9 90.4M192.3 75.3L195.1 88.8M191.6 75.4L193.3 91.4M190.9 75.4L190.9 89.2M190.2 75.4L188.5 91.4M189.5 75.3L186.7 88.8M188.9 75.1L183.9 90.4M188.2 74.8L182.6 87.5M187.6 74.5L179.6 88.5M187.0 74.1L178.9 85.3M186.5 73.7L175.7 85.7M186.0 73.2L175.7 82.5M185.6 72.7L172.5 82.1M185.2 72.1L173.2 79.0M184.9 71.5L170.2 78.0M184.6 70.8L171.5 75.1M184.4 70.2L168.7 73.5M184.3 69.5L170.6 70.9M184.3 68.8L168.2 68.8M184.3 68.1L170.6 66.7M184.4 67.4L168.7 64.1M184.6 66.8L171.5 62.5M184.9 66.1L170.2 59.6M185.2 65.5L173.2 58.6M185.6 64.9L172.5 55.5M186.0 64.4L175.7 55.1M186.5 63.9L175.7 51.9M187.0 63.5L178.9 52.3M187.6 63.1L179.5 49.1M188.2 62.8L182.6 50.1M188.9 62.5L183.9 47.2M189.5 62.3L186.7 48.8M190.2 62.2L188.5 46.2M190.9 62.2L190.9 48.4M191.6 62.2L193.3 46.2M192.3 62.3L195.1 48.8M192.9 62.5L197.9 47.2M193.6 62.8L199.2 50.1M194.2 63.1L202.2 49.1M194.8 63.5L202.9 52.3M195.3 63.9L206.1 51.9M195.8 64.4L206.1 55.1M196.2 64.9L209.3 55.5M196.6 65.5L208.6 58.6M196.9 66.1L211.6 59.6M197.2 66.8L210.3 62.5M197.4 67.4L213.1 64.1M197.5 68.1L211.2 66.7" stroke="#a87243" stroke-width=".58" fill="none"/></g><circle cx="190.9" cy="68.8" r="6.6" fill="#4b4846"/><circle cx="274.4" cy="91.2" r="17.2" fill="#949497" opacity="0.85"/><circle cx="296.4" cy="93.6" r="12.7" fill="#775a40" opacity="0.85"/><g opacity="0.9"><circle cx="191.9" cy="120" r="9.3" fill="#d4d5da" opacity=".3"/><path d="M197.9 120.0L212.5 120.0M197.9 120.6L210.3 121.9M197.8 121.2L212.0 124.3M197.6 121.9L209.5 125.7M197.4 122.4L210.7 128.4M197.1 123.0L208.0 129.3M196.8 123.5L208.6 132.1M196.4 124.0L205.7 132.4M195.9 124.5L205.7 135.3M195.4 124.9L202.8 135.0M194.9 125.2L202.2 137.8M194.3 125.5L199.4 136.9M193.8 125.7L198.3 139.6M193.1 125.9L195.8 138.1M192.5 126.0L194.1 140.5M191.9 126.0L191.9 138.5M191.3 126.0L189.7 140.5M190.7 125.9L188.0 138.1M190.0 125.7L185.5 139.6M189.5 125.5L184.4 136.9M188.9 125.2L181.6 137.8M188.4 124.9L181.0 135.0M187.9 124.5L178.1 135.3M187.4 124.0L178.1 132.4M187.0 123.5L175.2 132.1M186.7 123.0L175.8 129.3M186.4 122.4L173.1 128.4M186.2 121.9L174.3 125.7M186.0 121.2L171.8 124.3M185.9 120.6L173.5 121.9M185.9 120.0L171.3 120.0M185.9 119.4L173.5 118.1M186.0 118.8L171.8 115.7M186.2 118.1L174.3 114.3M186.4 117.6L173.1 111.6M186.7 117.0L175.8 110.7M187.0 116.5L175.2 107.9M187.4 116.0L178.1 107.6M187.9 115.5L178.1 104.7M188.4 115.1L181.0 105.0M188.9 114.8L181.6 102.2M189.5 114.5L184.4 103.1M190.0 114.3L185.5 100.4M190.7 114.1L188.0 101.9M191.3 114.0L189.7 99.5M191.9 114.0L191.9 101.5M192.5 114.0L194.1 99.5M193.1 114.1L195.8 101.9M193.8 114.3L198.3 100.4M194.3 114.5L199.4 103.1M194.9 114.8L202.2 102.2M195.4 115.1L202.8 105.0M195.9 115.5L205.7 104.7M196.4 116.0L205.7 107.6M196.8 116.5L208.6 107.9M197.1 117.0L208.0 110.7M197.4 117.6L210.7 111.6M197.6 118.1L209.5 114.3M197.8 118.8L212.0 115.7M197.9 119.4L210.3 118.1" stroke="#d4d5da" stroke-width=".58" fill="none"/></g><circle cx="191.9" cy="120" r="6.0" fill="#77777a"/></svg><div class="plus"><svg width="19" height="19" viewBox="0 0 19 19"><path d="M9.5 4.2v10.6M4.2 9.5h10.600" stroke="#fff" stroke-width="1.600" fill="none"/></svg></div></div><div class="lbl"><span class="nm">Tapete 50540</span></div></div><div class="card "><div class="img"><svg class="tx" viewBox="0 0 229 116" preserveAspectRatio="none"><defs><filter id="w5" x="0" y="0" width="100%" height="100%" color-interpolation-filters="sRGB"><feTurbulence type="fractalNoise" baseFrequency="0.9" numOctaves="1" seed="9"/><feColorMatrix type="matrix" values="1 0 0 0 0 1 0 0 0 0 1 0 0 0 0 0 0 0 0 1"/><feComponentTransfer><feFuncR type="table" tableValues="0.878 0.878 0.878 0.878 0.878 0.878 0.879 0.889 0.903 0.916 0.922 0.926 0.935 0.945 0.952 0.953 0.953 0.953 0.953 0.953 0.953"/><feFuncG type="table" tableValues="0.871 0.871 0.871 0.871 0.871 0.871 0.872 0.881 0.895 0.908 0.914 0.918 0.929 0.941 0.948 0.949 0.949 0.949 0.949 0.949 0.949"/><feFuncB type="table" tableValues="0.855 0.855 0.855 0.855 0.855 0.855 0.856 0.866 0.882 0.896 0.902 0.907 0.917 0.929 0.936 0.937 0.937 0.937 0.937 0.937 0.937"/></feComponentTransfer></filter></defs><rect width="229" height="116" filter="url(#w5)"/><clipPath id="hb10"><circle cx="12" cy="8.7" r="14.4"/></clipPath><path d="M29.2 10.9L-4.5 3.3M30.4 6.3L-3.1 -2.1M15.4 27.2L-3.8 -1.6M30.9 9.8L0.3 -6.2M29.5 5.9L-5.0 3.6M31.6 3.9L7.2 28.3M22.7 25.9L22.3 -8.7M17.2 25.4L2.5 -5.9M26.3 -2.2L-5.9 10.3M27.3 16.9L-2.2 -1.2M24.4 21.3L-4.5 2.3M24.7 -4.6L10.6 27.0M2.2 26.6L0.2 -8.0M31.9 4.9L-0.5 -7.2" stroke="#77777a" stroke-width="0.55" fill="none" clip-path="url(#hb10)" opacity="1"/><circle cx="76.6" cy="-3.7" r="13.7" fill="none" stroke="#a4a4a4" stroke-width="0.7"/><circle cx="105.5" cy="6.6" r="20" fill="#a3a3a3"/><circle cx="109.6" cy="6" r="12.4" fill="#cfcfcf"/><circle cx="110.5" cy="6" r="9" fill="#8f8f8f"/><circle cx="111.4" cy="44.8" r="17.2" fill="none" stroke="#9c9c9c" stroke-width="0.6"/><clipPath id="hb20"><circle cx="55.7" cy="76" r="20.6"/></clipPath><circle cx="55.7" cy="76" r="20.6" fill="#c6c6c5"/><path d="M57.1 101.4L42.6 54.2M62.3 103.3L29.2 66.6M76.8 62.3L40.8 96.2M51.3 103.2L36.7 56.0M82.2 71.0L34.1 59.8M83.9 84.9L36.4 98.4M57.9 50.7L42.2 97.5M61.2 100.2L53.5 51.3M66.0 52.7L35.8 91.9M67.9 98.2L53.9 50.8M80.7 74.5L32.6 85.7M70.1 96.1L41.7 55.6M64.3 52.7L51.8 100.5M45.1 50.0L39.7 99.1" stroke="#8a8a8a" stroke-width="0.5" fill="none" clip-path="url(#hb20)" opacity="1"/><circle cx="14.7" cy="106.3" r="20.6" fill="none" stroke="#b0b0b0" stroke-width="0.6"/><circle cx="19.5" cy="114.5" r="24" fill="none" stroke="#8c8c8c" stroke-width="0.9"/><circle cx="135.7" cy="117.3" r="15.8" fill="#d0d0cf"/><circle cx="68" cy="-8" r="14" fill="none" stroke="#a4a4a4" stroke-width="0.6"/><clipPath id="hb11"><circle cx="175.5" cy="8.7" r="14.4"/></clipPath><path d="M192.8 7.5L158.6 12.6M180.3 25.3L172.2 -8.3M192.7 11.1L158.2 10.3M185.2 -5.6L166.3 23.3M188.7 21.8L157.0 8.0M176.2 -9.2L166.1 23.9M187.2 -5.9L177.5 27.3M195.7 9.9L167.3 -9.8M165.8 26.6L163.8 -8.0M189.6 19.1L159.0 3.0M173.9 -11.8L157.5 18.6M193.6 0.1L159.2 -2.9M180.3 -8.9L160.9 19.6M176.3 -8.6L173.0 25.8" stroke="#77777a" stroke-width="0.55" fill="none" clip-path="url(#hb11)" opacity="1"/><circle cx="240.1" cy="-3.7" r="13.7" fill="none" stroke="#a4a4a4" stroke-width="0.7"/><circle cx="269.0" cy="6.6" r="20" fill="#a3a3a3"/><circle cx="273.1" cy="6" r="12.4" fill="#cfcfcf"/><circle cx="274.0" cy="6" r="9" fill="#8f8f8f"/><circle cx="274.9" cy="44.8" r="17.2" fill="none" stroke="#9c9c9c" stroke-width="0.6"/><clipPath id="hb21"><circle cx="219.2" cy="76" r="20.6"/></clipPath><circle cx="219.2" cy="76" r="20.6" fill="#c6c6c5"/><path d="M236.9 57.6L212.4 100.6M242.0 85.5L197.0 65.2M242.2 62.8L211.2 101.3M232.9 96.6L204.8 55.9M244.1 67.7L194.6 66.9M215.2 51.2L214.7 100.7M246.8 68.9L199.1 55.8M241.2 90.4L211.3 51.0M224.5 47.5L191.5 84.3M211.5 100.8L211.1 51.3M225.1 100.3L206.2 54.6M216.2 50.8L211.0 100.0M243.8 63.1L194.4 63.5M227.2 99.8L219.8 50.9" stroke="#8a8a8a" stroke-width="0.5" fill="none" clip-path="url(#hb21)" opacity="1"/><circle cx="178.2" cy="106.3" r="20.6" fill="none" stroke="#b0b0b0" stroke-width="0.6"/><circle cx="183.0" cy="114.5" r="24" fill="none" stroke="#8c8c8c" stroke-width="0.9"/><circle cx="299.2" cy="117.3" r="15.8" fill="#d0d0cf"/><circle cx="231.5" cy="-8" r="14" fill="none" stroke="#a4a4a4" stroke-width="0.6"/></svg><div class="plus"><svg width="19" height="19" viewBox="0 0 19 19"><path d="M9.5 4.2v10.6M4.2 9.5h10.600" stroke="#fff" stroke-width="1.600" fill="none"/></svg></div></div><div class="lbl"><span class="nm">Tapete 50536</span></div></div><div class="card "><div class="img"><svg class="tx" viewBox="0 0 229 116" preserveAspectRatio="none"><defs><filter id="w6" x="0" y="0" width="100%" height="100%" color-interpolation-filters="sRGB"><feTurbulence type="fractalNoise" baseFrequency="0.9" numOctaves="1" seed="11"/><feColorMatrix type="matrix" values="1 0 0 0 0 1 0 0 0 0 1 0 0 0 0 0 0 0 0 1"/><feComponentTransfer><feFuncR type="table" tableValues="0.886 0.886 0.886 0.886 0.886 0.886 0.887 0.895 0.906 0.917 0.922 0.925 0.932 0.939 0.945 0.945 0.945 0.945 0.945 0.945 0.945"/><feFuncG type="table" tableValues="0.875 0.875 0.875 0.875 0.875 0.875 0.875 0.883 0.895 0.905 0.910 0.913 0.920 0.928 0.933 0.933 0.933 0.933 0.933 0.933 0.933"/><feFuncB type="table" tableValues="0.851 0.851 0.851 0.851 0.851 0.851 0.852 0.860 0.873 0.885 0.890 0.894 0.902 0.911 0.917 0.918 0.918 0.918 0.918 0.918 0.918"/></feComponentTransfer></filter></defs><rect width="229" height="116" filter="url(#w6)"/></svg><div class="plus"><svg width="19" height="19" viewBox="0 0 19 19"><path d="M9.5 4.2v10.6M4.2 9.5h10.600" stroke="#fff" stroke-width="1.600" fill="none"/></svg></div></div><div class="lbl"><span class="nm">Tapete 50535</span></div></div></div></div>
<div class="sec r3" style="top:531px"><div class="hd"><span class="t">Bodenbeläge</span><span class="all">Alle anzeigen</span></div><div class="cards"><div class="card "><div class="img"><svg class="tx" viewBox="0 0 229 116" preserveAspectRatio="none"><defs><filter id="f1" x="0" y="0" width="100%" height="100%" color-interpolation-filters="sRGB"><feTurbulence type="fractalNoise" baseFrequency="0.5" numOctaves="2" seed="3"/><feColorMatrix type="matrix" values="1 0 0 0 0 1 0 0 0 0 1 0 0 0 0 0 0 0 0 1" result="f"/><feTurbulence type="fractalNoise" baseFrequency="0.2" numOctaves="2" seed="53"/><feColorMatrix type="matrix" values="1 0 0 0 0 1 0 0 0 0 1 0 0 0 0 0 0 0 0 1" result="c"/><feComposite operator="arithmetic" in="f" in2="c" k1="0" k2="1" k3="0.3" k4="-0.150"/><feColorMatrix type="matrix" values="1 0 0 0 0 1 0 0 0 0 1 0 0 0 0 0 0 0 0 1"/><feComponentTransfer><feFuncR type="table" tableValues="0.749 0.749 0.749 0.749 0.762 0.788 0.823 0.859 0.892 0.916 0.925 0.928 0.935 0.943 0.952 0.958 0.961 0.961 0.961 0.961 0.961"/><feFuncG type="table" tableValues="0.647 0.647 0.647 0.648 0.663 0.695 0.737 0.782 0.822 0.851 0.863 0.867 0.877 0.890 0.903 0.914 0.918 0.918 0.918 0.918 0.918"/><feFuncB type="table" tableValues="0.573 0.573 0.573 0.573 0.590 0.626 0.672 0.722 0.767 0.799 0.812 0.817 0.829 0.845 0.861 0.873 0.878 0.878 0.878 0.878 0.878"/></feComponentTransfer></filter></defs><rect width="229" height="116" filter="url(#f1)"/></svg><div class="plus"><svg width="19" height="19" viewBox="0 0 19 19"><path d="M9.5 4.2v10.6M4.2 9.5h10.600" stroke="#fff" stroke-width="1.600" fill="none"/></svg></div></div><div class="lbl"><span class="nm">M-Plus 1301-198 TR / RM</span></div></div><div class="card "><div class="img"><svg class="tx" viewBox="0 0 229 116" preserveAspectRatio="none"><defs><filter id="f2" x="0" y="0" width="100%" height="100%" color-interpolation-filters="sRGB"><feTurbulence type="fractalNoise" baseFrequency="0.45" numOctaves="2" seed="8"/><feColorMatrix type="matrix" values="1 0 0 0 0 1 0 0 0 0 1 0 0 0 0 0 0 0 0 1" result="f"/><feTurbulence type="fractalNoise" baseFrequency="0.2" numOctaves="2" seed="58"/><feColorMatrix type="matrix" values="1 0 0 0 0 1 0 0 0 0 1 0 0 0 0 0 0 0 0 1" result="c"/><feComposite operator="arithmetic" in="f" in2="c" k1="0" k2="1" k3="0.3" k4="-0.150"/><feColorMatrix type="matrix" values="1 0 0 0 0 1 0 0 0 0 1 0 0 0 0 0 0 0 0 1"/><feComponentTransfer><feFuncR type="table" tableValues="0.314 0.314 0.314 0.314 0.314 0.335 0.389 0.459 0.529 0.582 0.604 0.614 0.640 0.673 0.706 0.731 0.741 0.741 0.741 0.741 0.741"/><feFuncG type="table" tableValues="0.227 0.227 0.227 0.227 0.227 0.249 0.303 0.373 0.442 0.496 0.518 0.528 0.553 0.586 0.619 0.645 0.655 0.655 0.655 0.655 0.655"/><feFuncB type="table" tableValues="0.173 0.173 0.173 0.173 0.173 0.193 0.243 0.308 0.373 0.423 0.443 0.453 0.478 0.510 0.542 0.567 0.576 0.576 0.576 0.576 0.576"/></feComponentTransfer></filter></defs><rect width="229" height="116" filter="url(#f2)"/></svg><div class="plus"><svg width="19" height="19" viewBox="0 0 19 19"><path d="M9.5 4.2v10.6M4.2 9.5h10.600" stroke="#fff" stroke-width="1.600" fill="none"/></svg></div></div><div class="lbl"><span class="nm">M-Plus 1301-225 TR / RM</span></div></div><div class="card "><div class="img"><svg class="tx" viewBox="0 0 229 116" preserveAspectRatio="none"><defs><filter id="f3" x="0" y="0" width="100%" height="100%" color-interpolation-filters="sRGB"><feTurbulence type="fractalNoise" baseFrequency="0.45" numOctaves="2" seed="12"/><feColorMatrix type="matrix" values="1 0 0 0 0 1 0 0 0 0 1 0 0 0 0 0 0 0 0 1" result="f"/><feTurbulence type="fractalNoise" baseFrequency="0.2" numOctaves="2" seed="62"/><feColorMatrix type="matrix" values="1 0 0 0 0 1 0 0 0 0 1 0 0 0 0 0 0 0 0 1" result="c"/><feComposite operator="arithmetic" in="f" in2="c" k1="0" k2="1" k3="0.3" k4="-0.150"/><feColorMatrix type="matrix" values="1 0 0 0 0 1 0 0 0 0 1 0 0 0 0 0 0 0 0 1"/><feComponentTransfer><feFuncR type="table" tableValues="0.522 0.522 0.522 0.522 0.522 0.543 0.597 0.667 0.737 0.790 0.812 0.818 0.835 0.857 0.879 0.895 0.902 0.902 0.902 0.902 0.902"/><feFuncG type="table" tableValues="0.286 0.286 0.286 0.286 0.286 0.306 0.356 0.422 0.487 0.537 0.557 0.566 0.589 0.620 0.650 0.673 0.682 0.682 0.682 0.682 0.682"/><feFuncB type="table" tableValues="0.102 0.102 0.102 0.102 0.102 0.114 0.144 0.182 0.221 0.251 0.263 0.273 0.300 0.335 0.370 0.397 0.408 0.408 0.408 0.408 0.408"/></feComponentTransfer></filter></defs><rect width="229" height="116" filter="url(#f3)"/></svg><div class="plus"><svg width="19" height="19" viewBox="0 0 19 19"><path d="M9.5 4.2v10.6M4.2 9.5h10.600" stroke="#fff" stroke-width="1.600" fill="none"/></svg></div></div><div class="lbl"><span class="nm">M-Plus 1301-341 TR / RM</span></div></div><div class="card "><div class="img"><svg class="tx" viewBox="0 0 229 116" preserveAspectRatio="none"><defs><filter id="f4" x="0" y="0" width="100%" height="100%" color-interpolation-filters="sRGB"><feTurbulence type="fractalNoise" baseFrequency="0.45" numOctaves="2" seed="15"/><feColorMatrix type="matrix" values="1 0 0 0 0 1 0 0 0 0 1 0 0 0 0 0 0 0 0 1" result="f"/><feTurbulence type="fractalNoise" baseFrequency="0.2" numOctaves="2" seed="65"/><feColorMatrix type="matrix" values="1 0 0 0 0 1 0 0 0 0 1 0 0 0 0 0 0 0 0 1" result="c"/><feComposite operator="arithmetic" in="f" in2="c" k1="0" k2="1" k3="0.3" k4="-0.150"/><feColorMatrix type="matrix" values="1 0 0 0 0 1 0 0 0 0 1 0 0 0 0 0 0 0 0 1"/><feComponentTransfer><feFuncR type="table" tableValues="0.353 0.353 0.353 0.353 0.353 0.377 0.436 0.514 0.591 0.651 0.675 0.686 0.713 0.749 0.785 0.812 0.824 0.824 0.824 0.824 0.824"/><feFuncG type="table" tableValues="0.267 0.267 0.267 0.267 0.267 0.290 0.348 0.424 0.499 0.557 0.580 0.592 0.620 0.657 0.694 0.722 0.733 0.733 0.733 0.733 0.733"/><feFuncB type="table" tableValues="0.204 0.204 0.204 0.204 0.204 0.225 0.279 0.349 0.419 0.473 0.494 0.506 0.535 0.573 0.610 0.639 0.651 0.651 0.651 0.651 0.651"/></feComponentTransfer></filter></defs><rect width="229" height="116" filter="url(#f4)"/></svg><div class="plus"><svg width="19" height="19" viewBox="0 0 19 19"><path d="M9.5 4.2v10.6M4.2 9.5h10.600" stroke="#fff" stroke-width="1.600" fill="none"/></svg></div></div><div class="lbl"><span class="nm">M-Plus 1301-370 TR / RM</span></div></div><div class="card "><div class="img"><svg class="tx" viewBox="0 0 229 116" preserveAspectRatio="none"><defs><filter id="f5" x="0" y="0" width="100%" height="100%" color-interpolation-filters="sRGB"><feTurbulence type="fractalNoise" baseFrequency="0.45" numOctaves="2" seed="21"/><feColorMatrix type="matrix" values="1 0 0 0 0 1 0 0 0 0 1 0 0 0 0 0 0 0 0 1" result="f"/><feTurbulence type="fractalNoise" baseFrequency="0.2" numOctaves="2" seed="71"/><feColorMatrix type="matrix" values="1 0 0 0 0 1 0 0 0 0 1 0 0 0 0 0 0 0 0 1" result="c"/><feComposite operator="arithmetic" in="f" in2="c" k1="0" k2="1" k3="0.3" k4="-0.150"/><feColorMatrix type="matrix" values="1 0 0 0 0 1 0 0 0 0 1 0 0 0 0 0 0 0 0 1"/><feComponentTransfer><feFuncR type="table" tableValues="0.365 0.365 0.365 0.365 0.365 0.389 0.449 0.527 0.606 0.666 0.690 0.699 0.723 0.753 0.783 0.806 0.816 0.816 0.816 0.816 0.816"/><feFuncG type="table" tableValues="0.318 0.318 0.318 0.318 0.318 0.341 0.400 0.476 0.553 0.612 0.635 0.645 0.671 0.704 0.737 0.762 0.773 0.773 0.773 0.773 0.773"/><feFuncB type="table" tableValues="0.275 0.275 0.275 0.275 0.275 0.297 0.353 0.425 0.498 0.554 0.576 0.587 0.614 0.649 0.684 0.711 0.722 0.722 0.722 0.722 0.722"/></feComponentTransfer></filter></defs><rect width="229" height="116" filter="url(#f5)"/></svg><div class="plus"><svg width="19" height="19" viewBox="0 0 19 19"><path d="M9.5 4.2v10.6M4.2 9.5h10.600" stroke="#fff" stroke-width="1.600" fill="none"/></svg></div></div><div class="lbl"><span class="nm">M-Plus 1301-495 TR / RM</span></div></div><div class="card "><div class="img"><svg class="tx" viewBox="0 0 229 116" preserveAspectRatio="none"><defs><filter id="f6" x="0" y="0" width="100%" height="100%" color-interpolation-filters="sRGB"><feTurbulence type="fractalNoise" baseFrequency="0.5" numOctaves="2" seed="30"/><feColorMatrix type="matrix" values="1 0 0 0 0 1 0 0 0 0 1 0 0 0 0 0 0 0 0 1" result="f"/><feTurbulence type="fractalNoise" baseFrequency="0.2" numOctaves="2" seed="80"/><feColorMatrix type="matrix" values="1 0 0 0 0 1 0 0 0 0 1 0 0 0 0 0 0 0 0 1" result="c"/><feComposite operator="arithmetic" in="f" in2="c" k1="0" k2="1" k3="0.3" k4="-0.150"/><feColorMatrix type="matrix" values="1 0 0 0 0 1 0 0 0 0 1 0 0 0 0 0 0 0 0 1"/><feComponentTransfer><feFuncR type="table" tableValues="0.608 0.608 0.608 0.608 0.625 0.660 0.706 0.755 0.799 0.831 0.843 0.848 0.860 0.876 0.893 0.905 0.910 0.910 0.910 0.910 0.910"/><feFuncG type="table" tableValues="0.608 0.608 0.608 0.608 0.625 0.660 0.706 0.755 0.799 0.831 0.843 0.848 0.860 0.876 0.893 0.905 0.910 0.910 0.910 0.910 0.910"/><feFuncB type="table" tableValues="0.604 0.604 0.604 0.604 0.621 0.656 0.702 0.751 0.795 0.827 0.839 0.844 0.856 0.873 0.889 0.901 0.906 0.906 0.906 0.906 0.906"/></feComponentTransfer></filter></defs><rect width="229" height="116" filter="url(#f6)"/></svg><div class="plus"><svg width="19" height="19" viewBox="0 0 19 19"><path d="M9.5 4.2v10.6M4.2 9.5h10.600" stroke="#fff" stroke-width="1.600" fill="none"/></svg></div></div><div class="lbl"><span class="nm">M-Plus 1301-693 TR / RM</span></div></div></div></div>
<div class="sec r4" style="top:739px"><div class="hd"><span class="t">Fassadenbeläge</span><span class="all">Alle anzeigen</span></div><div class="cards"><div class="card "><div class="img"><svg class="tx" viewBox="0 0 229 116" preserveAspectRatio="none"><defs><filter id="b1b" x="-5%" y="-5%" width="110%" height="110%"><feGaussianBlur stdDeviation="3.2"/></filter><filter id="b1n" x="0" y="0" width="100%" height="100%" color-interpolation-filters="sRGB"><feTurbulence type="fractalNoise" baseFrequency="0.8" numOctaves="2" seed="4"/><feColorMatrix type="matrix" values="0 0 0 0 0.55 0 0 0 0 0.42 0 0 0 0 0.36 1.6 0 0 0 -0.7"/></filter></defs><path d="M-0.4 -0.4L60.5 -0.4L60.5 85.5L45.9 85.5L45.9 13.4L-0.4 13.4Z" fill="#7e4238"/><path d="M-0.4 13.4L13.1 13.4L13.1 85.5L60.5 85.5L60.5 100.8L-0.4 100.8Z" fill="#753c34"/><path d="M-0.4 100.8L60.5 100.8L60.5 186.7L45.9 186.7L45.9 114.6L-0.4 114.6Z" fill="#783e35"/><path d="M-0.4 114.6L13.1 114.6L13.1 186.7L60.5 186.7L60.5 202.0L-0.4 202.0Z" fill="#7c4137"/><path d="M60.5 -0.4L121.4 -0.4L121.4 85.5L106.8 85.5L106.8 13.4L60.5 13.4Z" fill="#814439"/><path d="M60.5 13.4L74.0 13.4L74.0 85.5L121.4 85.5L121.4 100.8L60.5 100.8Z" fill="#773d35"/><path d="M60.5 100.8L121.4 100.8L121.4 186.7L106.8 186.7L106.8 114.6L60.5 114.6Z" fill="#753c34"/><path d="M60.5 114.6L74.0 114.6L74.0 186.7L121.4 186.7L121.4 202.0L60.5 202.0Z" fill="#80463a"/><path d="M121.4 -0.4L182.3 -0.4L182.3 85.5L167.7 85.5L167.7 13.4L121.4 13.4Z" fill="#7c4137"/><path d="M121.4 13.4L134.9 13.4L134.9 85.5L182.3 85.5L182.3 100.8L121.4 100.8Z" fill="#743b33"/><path d="M121.4 100.8L182.3 100.8L182.3 186.7L167.7 186.7L167.7 114.6L121.4 114.6Z" fill="#773d35"/><path d="M121.4 114.6L134.9 114.6L134.9 186.7L182.3 186.7L182.3 202.0L121.4 202.0Z" fill="#7e4238"/><path d="M182.3 -0.4L243.2 -0.4L243.2 85.5L228.6 85.5L228.6 13.4L182.3 13.4Z" fill="#80463a"/><path d="M182.3 13.4L195.8 13.4L195.8 85.5L243.2 85.5L243.2 100.8L182.3 100.8Z" fill="#783e35"/><path d="M182.3 100.8L243.2 100.8L243.2 186.7L228.6 186.7L228.6 114.6L182.3 114.6Z" fill="#743b33"/><path d="M182.3 114.6L195.8 114.6L195.8 186.7L243.2 186.7L243.2 202.0L182.3 202.0Z" fill="#814439"/><g filter="url(#b1b)"><ellipse cx="9.7" cy="6.3" rx="10" ry="5" fill="#3f2c24" opacity=".6"/><ellipse cx="6.6" cy="54.5" rx="6" ry="11" fill="#3f2c24" opacity=".6"/><ellipse cx="53.6" cy="39.5" rx="4" ry="12" fill="#3f2c24" opacity=".6"/><ellipse cx="80" cy="6.9" rx="11" ry="5" fill="#3f2c24" opacity=".6"/><ellipse cx="68" cy="39.5" rx="5" ry="13" fill="#3f2c24" opacity=".6"/><ellipse cx="115" cy="39.5" rx="5" ry="10" fill="#3f2c24" opacity=".6"/><ellipse cx="110" cy="92.8" rx="10" ry="5" fill="#3f2c24" opacity=".6"/><ellipse cx="127.8" cy="51" rx="6" ry="11" fill="#3f2c24" opacity=".6"/><ellipse cx="133" cy="6" rx="10" ry="5" fill="#3f2c24" opacity=".6"/><ellipse cx="188.5" cy="61" rx="5" ry="10" fill="#3f2c24" opacity=".6"/><ellipse cx="191" cy="32" rx="4" ry="8" fill="#3f2c24" opacity=".6"/><ellipse cx="45" cy="108" rx="10" ry="4" fill="#3f2c24" opacity=".6"/><ellipse cx="160" cy="108" rx="12" ry="4" fill="#3f2c24" opacity=".6"/><ellipse cx="210" cy="6" rx="8" ry="4" fill="#3f2c24" opacity=".6"/><ellipse cx="170" cy="93" rx="8" ry="4" fill="#3f2c24" opacity=".6"/><ellipse cx="236" cy="50" rx="4" ry="10" fill="#3f2c24" opacity=".6"/><ellipse cx="6" cy="23" rx="4" ry="8" fill="#a9665a" opacity=".5"/><ellipse cx="53.6" cy="73" rx="4" ry="10" fill="#a9665a" opacity=".5"/><ellipse cx="67.4" cy="20.7" rx="4" ry="8" fill="#a9665a" opacity=".5"/><ellipse cx="112.5" cy="75.9" rx="4" ry="9" fill="#a9665a" opacity=".5"/><ellipse cx="128" cy="22" rx="4" ry="7" fill="#a9665a" opacity=".5"/><ellipse cx="175" cy="70" rx="4" ry="12" fill="#a9665a" opacity=".5"/><ellipse cx="30" cy="94" rx="10" ry="4" fill="#a9665a" opacity=".5"/><ellipse cx="150" cy="6" rx="10" ry="4" fill="#a9665a" opacity=".5"/><ellipse cx="100" cy="6" rx="6" ry="4" fill="#a9665a" opacity=".5"/></g><rect x="13.1" y="13.4" width="32.8" height="72.1" fill="#7a3623"/><rect x="13.1" y="114.6" width="32.8" height="72.1" fill="#7a3623"/><rect x="74.0" y="13.4" width="32.8" height="72.1" fill="#793524"/><rect x="74.0" y="114.6" width="32.8" height="72.1" fill="#793524"/><rect x="134.9" y="13.4" width="32.8" height="72.1" fill="#a5542a"/><rect x="134.9" y="114.6" width="32.8" height="72.1" fill="#a5542a"/><rect x="195.8" y="13.4" width="32.8" height="72.1" fill="#783623"/><rect x="195.8" y="114.6" width="32.8" height="72.1" fill="#783623"/><rect width="229" height="116" filter="url(#b1n)" opacity=".22"/><path d="M-0.4 -0.4H60.5V100.8H-0.4ZM13.1 13.4H45.9V85.5H13.1ZM-0.4 13.4H13.1M45.9 85.5H60.5M-0.4 100.8H60.5V202.0H-0.4ZM13.1 114.6H45.9V186.7H13.1ZM-0.4 114.6H13.1M45.9 186.7H60.5M60.5 -0.4H121.4V100.8H60.5ZM74.0 13.4H106.8V85.5H74.0ZM60.5 13.4H74.0M106.8 85.5H121.4M60.5 100.8H121.4V202.0H60.5ZM74.0 114.6H106.8V186.7H74.0ZM60.5 114.6H74.0M106.8 186.7H121.4M121.4 -0.4H182.3V100.8H121.4ZM134.9 13.4H167.7V85.5H134.9ZM121.4 13.4H134.9M167.7 85.5H182.3M121.4 100.8H182.3V202.0H121.4ZM134.9 114.6H167.7V186.7H134.9ZM121.4 114.6H134.9M167.7 186.7H182.3M182.3 -0.4H243.2V100.8H182.3ZM195.8 13.4H228.6V85.5H195.8ZM182.3 13.4H195.8M228.6 85.5H243.2M182.3 100.8H243.2V202.0H182.3ZM195.8 114.6H228.6V186.7H195.8ZM182.3 114.6H195.8M228.6 186.7H243.2" fill="none" stroke="#46362f" stroke-width="1.5"/></svg><div class="plus"><svg width="19" height="19" viewBox="0 0 19 19"><path d="M9.5 4.2v10.6M4.2 9.5h10.600" stroke="#fff" stroke-width="1.600" fill="none"/></svg></div></div><div class="lbl"><span class="nm">Klinker dunkel</span></div></div><div class="card "><div class="img"><svg class="tx" viewBox="0 0 229 116" preserveAspectRatio="none"><defs><filter id="b2b" x="-5%" y="-5%" width="110%" height="110%"><feGaussianBlur stdDeviation="3.2"/></filter><filter id="b2n" x="0" y="0" width="100%" height="100%" color-interpolation-filters="sRGB"><feTurbulence type="fractalNoise" baseFrequency="0.8" numOctaves="2" seed="4"/><feColorMatrix type="matrix" values="0 0 0 0 0.55 0 0 0 0 0.42 0 0 0 0 0.36 1.6 0 0 0 -0.7"/></filter></defs><path d="M-0.4 -0.4L60.5 -0.4L60.5 85.5L45.9 85.5L45.9 13.4L-0.4 13.4Z" fill="#7e4238"/><path d="M-0.4 13.4L13.1 13.4L13.1 85.5L60.5 85.5L60.5 100.8L-0.4 100.8Z" fill="#753c34"/><path d="M-0.4 100.8L60.5 100.8L60.5 186.7L45.9 186.7L45.9 114.6L-0.4 114.6Z" fill="#783e35"/><path d="M-0.4 114.6L13.1 114.6L13.1 186.7L60.5 186.7L60.5 202.0L-0.4 202.0Z" fill="#7c4137"/><path d="M60.5 -0.4L121.4 -0.4L121.4 85.5L106.8 85.5L106.8 13.4L60.5 13.4Z" fill="#814439"/><path d="M60.5 13.4L74.0 13.4L74.0 85.5L121.4 85.5L121.4 100.8L60.5 100.8Z" fill="#773d35"/><path d="M60.5 100.8L121.4 100.8L121.4 186.7L106.8 186.7L106.8 114.6L60.5 114.6Z" fill="#753c34"/><path d="M60.5 114.6L74.0 114.6L74.0 186.7L121.4 186.7L121.4 202.0L60.5 202.0Z" fill="#80463a"/><path d="M121.4 -0.4L182.3 -0.4L182.3 85.5L167.7 85.5L167.7 13.4L121.4 13.4Z" fill="#7c4137"/><path d="M121.4 13.4L134.9 13.4L134.9 85.5L182.3 85.5L182.3 100.8L121.4 100.8Z" fill="#743b33"/><path d="M121.4 100.8L182.3 100.8L182.3 186.7L167.7 186.7L167.7 114.6L121.4 114.6Z" fill="#773d35"/><path d="M121.4 114.6L134.9 114.6L134.9 186.7L182.3 186.7L182.3 202.0L121.4 202.0Z" fill="#7e4238"/><path d="M182.3 -0.4L243.2 -0.4L243.2 85.5L228.6 85.5L228.6 13.4L182.3 13.4Z" fill="#80463a"/><path d="M182.3 13.4L195.8 13.4L195.8 85.5L243.2 85.5L243.2 100.8L182.3 100.8Z" fill="#783e35"/><path d="M182.3 100.8L243.2 100.8L243.2 186.7L228.6 186.7L228.6 114.6L182.3 114.6Z" fill="#743b33"/><path d="M182.3 114.6L195.8 114.6L195.8 186.7L243.2 186.7L243.2 202.0L182.3 202.0Z" fill="#814439"/><g filter="url(#b2b)"><ellipse cx="9.7" cy="6.3" rx="10" ry="5" fill="#3f2c24" opacity=".6"/><ellipse cx="6.6" cy="54.5" rx="6" ry="11" fill="#3f2c24" opacity=".6"/><ellipse cx="53.6" cy="39.5" rx="4" ry="12" fill="#3f2c24" opacity=".6"/><ellipse cx="80" cy="6.9" rx="11" ry="5" fill="#3f2c24" opacity=".6"/><ellipse cx="68" cy="39.5" rx="5" ry="13" fill="#3f2c24" opacity=".6"/><ellipse cx="115" cy="39.5" rx="5" ry="10" fill="#3f2c24" opacity=".6"/><ellipse cx="110" cy="92.8" rx="10" ry="5" fill="#3f2c24" opacity=".6"/><ellipse cx="127.8" cy="51" rx="6" ry="11" fill="#3f2c24" opacity=".6"/><ellipse cx="133" cy="6" rx="10" ry="5" fill="#3f2c24" opacity=".6"/><ellipse cx="188.5" cy="61" rx="5" ry="10" fill="#3f2c24" opacity=".6"/><ellipse cx="191" cy="32" rx="4" ry="8" fill="#3f2c24" opacity=".6"/><ellipse cx="45" cy="108" rx="10" ry="4" fill="#3f2c24" opacity=".6"/><ellipse cx="160" cy="108" rx="12" ry="4" fill="#3f2c24" opacity=".6"/><ellipse cx="210" cy="6" rx="8" ry="4" fill="#3f2c24" opacity=".6"/><ellipse cx="170" cy="93" rx="8" ry="4" fill="#3f2c24" opacity=".6"/><ellipse cx="236" cy="50" rx="4" ry="10" fill="#3f2c24" opacity=".6"/><ellipse cx="6" cy="23" rx="4" ry="8" fill="#a9665a" opacity=".5"/><ellipse cx="53.6" cy="73" rx="4" ry="10" fill="#a9665a" opacity=".5"/><ellipse cx="67.4" cy="20.7" rx="4" ry="8" fill="#a9665a" opacity=".5"/><ellipse cx="112.5" cy="75.9" rx="4" ry="9" fill="#a9665a" opacity=".5"/><ellipse cx="128" cy="22" rx="4" ry="7" fill="#a9665a" opacity=".5"/><ellipse cx="175" cy="70" rx="4" ry="12" fill="#a9665a" opacity=".5"/><ellipse cx="30" cy="94" rx="10" ry="4" fill="#a9665a" opacity=".5"/><ellipse cx="150" cy="6" rx="10" ry="4" fill="#a9665a" opacity=".5"/><ellipse cx="100" cy="6" rx="6" ry="4" fill="#a9665a" opacity=".5"/></g><rect x="13.1" y="13.4" width="32.8" height="72.1" fill="#7a3623"/><rect x="13.1" y="114.6" width="32.8" height="72.1" fill="#7a3623"/><rect x="74.0" y="13.4" width="32.8" height="72.1" fill="#793524"/><rect x="74.0" y="114.6" width="32.8" height="72.1" fill="#793524"/><rect x="134.9" y="13.4" width="32.8" height="72.1" fill="#a5542a"/><rect x="134.9" y="114.6" width="32.8" height="72.1" fill="#a5542a"/><rect x="195.8" y="13.4" width="32.8" height="72.1" fill="#783623"/><rect x="195.8" y="114.6" width="32.8" height="72.1" fill="#783623"/><rect width="229" height="116" filter="url(#b2n)" opacity=".22"/><path d="M-0.4 -0.4H60.5V100.8H-0.4ZM13.1 13.4H45.9V85.5H13.1ZM-0.4 13.4H13.1M45.9 85.5H60.5M-0.4 100.8H60.5V202.0H-0.4ZM13.1 114.6H45.9V186.7H13.1ZM-0.4 114.6H13.1M45.9 186.7H60.5M60.5 -0.4H121.4V100.8H60.5ZM74.0 13.4H106.8V85.5H74.0ZM60.5 13.4H74.0M106.8 85.5H121.4M60.5 100.8H121.4V202.0H60.5ZM74.0 114.6H106.8V186.7H74.0ZM60.5 114.6H74.0M106.8 186.7H121.4M121.4 -0.4H182.3V100.8H121.4ZM134.9 13.4H167.7V85.5H134.9ZM121.4 13.4H134.9M167.7 85.5H182.3M121.4 100.8H182.3V202.0H121.4ZM134.9 114.6H167.7V186.7H134.9ZM121.4 114.6H134.9M167.7 186.7H182.3M182.3 -0.4H243.2V100.8H182.3ZM195.8 13.4H228.6V85.5H195.8ZM182.3 13.4H195.8M228.6 85.5H243.2M182.3 100.8H243.2V202.0H182.3ZM195.8 114.6H228.6V186.7H195.8ZM182.3 114.6H195.8M228.6 186.7H243.2" fill="none" stroke="#d6c4b0" stroke-width="1.6"/></svg><div class="plus"><svg width="19" height="19" viewBox="0 0 19 19"><path d="M9.5 4.2v10.6M4.2 9.5h10.600" stroke="#fff" stroke-width="1.600" fill="none"/></svg></div></div><div class="lbl"><span class="nm">Klinker hell</span></div></div><div class="card "><div class="img"><svg class="tx" viewBox="0 0 229 116" preserveAspectRatio="none"><defs><filter id="b3b" x="-5%" y="-5%" width="110%" height="110%"><feGaussianBlur stdDeviation="3.2"/></filter><filter id="b3n" x="0" y="0" width="100%" height="100%" color-interpolation-filters="sRGB"><feTurbulence type="fractalNoise" baseFrequency="0.8" numOctaves="2" seed="4"/><feColorMatrix type="matrix" values="0 0 0 0 0.55 0 0 0 0 0.42 0 0 0 0 0.36 1.6 0 0 0 -0.7"/></filter></defs><path d="M-0.4 -0.4L60.5 -0.4L60.5 85.5L45.9 85.5L45.9 13.4L-0.4 13.4Z" fill="#7e4238"/><path d="M-0.4 13.4L13.1 13.4L13.1 85.5L60.5 85.5L60.5 100.8L-0.4 100.8Z" fill="#753c34"/><path d="M-0.4 100.8L60.5 100.8L60.5 186.7L45.9 186.7L45.9 114.6L-0.4 114.6Z" fill="#783e35"/><path d="M-0.4 114.6L13.1 114.6L13.1 186.7L60.5 186.7L60.5 202.0L-0.4 202.0Z" fill="#7c4137"/><path d="M60.5 -0.4L121.4 -0.4L121.4 85.5L106.8 85.5L106.8 13.4L60.5 13.4Z" fill="#814439"/><path d="M60.5 13.4L74.0 13.4L74.0 85.5L121.4 85.5L121.4 100.8L60.5 100.8Z" fill="#773d35"/><path d="M60.5 100.8L121.4 100.8L121.4 186.7L106.8 186.7L106.8 114.6L60.5 114.6Z" fill="#753c34"/><path d="M60.5 114.6L74.0 114.6L74.0 186.7L121.4 186.7L121.4 202.0L60.5 202.0Z" fill="#80463a"/><path d="M121.4 -0.4L182.3 -0.4L182.3 85.5L167.7 85.5L167.7 13.4L121.4 13.4Z" fill="#7c4137"/><path d="M121.4 13.4L134.9 13.4L134.9 85.5L182.3 85.5L182.3 100.8L121.4 100.8Z" fill="#743b33"/><path d="M121.4 100.8L182.3 100.8L182.3 186.7L167.7 186.7L167.7 114.6L121.4 114.6Z" fill="#773d35"/><path d="M121.4 114.6L134.9 114.6L134.9 186.7L182.3 186.7L182.3 202.0L121.4 202.0Z" fill="#7e4238"/><path d="M182.3 -0.4L243.2 -0.4L243.2 85.5L228.6 85.5L228.6 13.4L182.3 13.4Z" fill="#80463a"/><path d="M182.3 13.4L195.8 13.4L195.8 85.5L243.2 85.5L243.2 100.8L182.3 100.8Z" fill="#783e35"/><path d="M182.3 100.8L243.2 100.8L243.2 186.7L228.6 186.7L228.6 114.6L182.3 114.6Z" fill="#743b33"/><path d="M182.3 114.6L195.8 114.6L195.8 186.7L243.2 186.7L243.2 202.0L182.3 202.0Z" fill="#814439"/><g filter="url(#b3b)"><ellipse cx="9.7" cy="6.3" rx="10" ry="5" fill="#3f2c24" opacity=".6"/><ellipse cx="6.6" cy="54.5" rx="6" ry="11" fill="#3f2c24" opacity=".6"/><ellipse cx="53.6" cy="39.5" rx="4" ry="12" fill="#3f2c24" opacity=".6"/><ellipse cx="80" cy="6.9" rx="11" ry="5" fill="#3f2c24" opacity=".6"/><ellipse cx="68" cy="39.5" rx="5" ry="13" fill="#3f2c24" opacity=".6"/><ellipse cx="115" cy="39.5" rx="5" ry="10" fill="#3f2c24" opacity=".6"/><ellipse cx="110" cy="92.8" rx="10" ry="5" fill="#3f2c24" opacity=".6"/><ellipse cx="127.8" cy="51" rx="6" ry="11" fill="#3f2c24" opacity=".6"/><ellipse cx="133" cy="6" rx="10" ry="5" fill="#3f2c24" opacity=".6"/><ellipse cx="188.5" cy="61" rx="5" ry="10" fill="#3f2c24" opacity=".6"/><ellipse cx="191" cy="32" rx="4" ry="8" fill="#3f2c24" opacity=".6"/><ellipse cx="45" cy="108" rx="10" ry="4" fill="#3f2c24" opacity=".6"/><ellipse cx="160" cy="108" rx="12" ry="4" fill="#3f2c24" opacity=".6"/><ellipse cx="210" cy="6" rx="8" ry="4" fill="#3f2c24" opacity=".6"/><ellipse cx="170" cy="93" rx="8" ry="4" fill="#3f2c24" opacity=".6"/><ellipse cx="236" cy="50" rx="4" ry="10" fill="#3f2c24" opacity=".6"/><ellipse cx="6" cy="23" rx="4" ry="8" fill="#a9665a" opacity=".5"/><ellipse cx="53.6" cy="73" rx="4" ry="10" fill="#a9665a" opacity=".5"/><ellipse cx="67.4" cy="20.7" rx="4" ry="8" fill="#a9665a" opacity=".5"/><ellipse cx="112.5" cy="75.9" rx="4" ry="9" fill="#a9665a" opacity=".5"/><ellipse cx="128" cy="22" rx="4" ry="7" fill="#a9665a" opacity=".5"/><ellipse cx="175" cy="70" rx="4" ry="12" fill="#a9665a" opacity=".5"/><ellipse cx="30" cy="94" rx="10" ry="4" fill="#a9665a" opacity=".5"/><ellipse cx="150" cy="6" rx="10" ry="4" fill="#a9665a" opacity=".5"/><ellipse cx="100" cy="6" rx="6" ry="4" fill="#a9665a" opacity=".5"/></g><rect x="13.1" y="13.4" width="32.8" height="72.1" fill="#7a3623"/><rect x="13.1" y="114.6" width="32.8" height="72.1" fill="#7a3623"/><rect x="74.0" y="13.4" width="32.8" height="72.1" fill="#793524"/><rect x="74.0" y="114.6" width="32.8" height="72.1" fill="#793524"/><rect x="134.9" y="13.4" width="32.8" height="72.1" fill="#a5542a"/><rect x="134.9" y="114.6" width="32.8" height="72.1" fill="#a5542a"/><rect x="195.8" y="13.4" width="32.8" height="72.1" fill="#783623"/><rect x="195.8" y="114.6" width="32.8" height="72.1" fill="#783623"/><rect width="229" height="116" filter="url(#b3n)" opacity=".22"/><path d="M-0.4 -0.4H60.5V100.8H-0.4ZM13.1 13.4H45.9V85.5H13.1ZM-0.4 13.4H13.1M45.9 85.5H60.5M-0.4 100.8H60.5V202.0H-0.4ZM13.1 114.6H45.9V186.7H13.1ZM-0.4 114.6H13.1M45.9 186.7H60.5M60.5 -0.4H121.4V100.8H60.5ZM74.0 13.4H106.8V85.5H74.0ZM60.5 13.4H74.0M106.8 85.5H121.4M60.5 100.8H121.4V202.0H60.5ZM74.0 114.6H106.8V186.7H74.0ZM60.5 114.6H74.0M106.8 186.7H121.4M121.4 -0.4H182.3V100.8H121.4ZM134.9 13.4H167.7V85.5H134.9ZM121.4 13.4H134.9M167.7 85.5H182.3M121.4 100.8H182.3V202.0H121.4ZM134.9 114.6H167.7V186.7H134.9ZM121.4 114.6H134.9M167.7 186.7H182.3M182.3 -0.4H243.2V100.8H182.3ZM195.8 13.4H228.6V85.5H195.8ZM182.3 13.4H195.8M228.6 85.5H243.2M182.3 100.8H243.2V202.0H182.3ZM195.8 114.6H228.6V186.7H195.8ZM182.3 114.6H195.8M228.6 186.7H243.2" fill="none" stroke="#a08b7e" stroke-width="1.5"/></svg><div class="plus"><svg width="19" height="19" viewBox="0 0 19 19"><path d="M9.5 4.2v10.6M4.2 9.5h10.600" stroke="#fff" stroke-width="1.600" fill="none"/></svg></div></div><div class="lbl"><span class="nm">Klinker grau</span></div></div><div class="card "><div class="img"><svg class="tx" viewBox="0 0 229 116" preserveAspectRatio="none"><defs><filter id="h1n" x="0" y="0" width="100%" height="100%" color-interpolation-filters="sRGB"><feTurbulence type="fractalNoise" baseFrequency="0.05 0.25" numOctaves="3" seed="5"/><feColorMatrix type="matrix" values="0 0 0 0 0.16 0 0 0 0 0.12 0 0 0 0 0.09 2.4 0 0 0 -1.0"/></filter></defs><rect width="229" height="116" fill="#65544a"/><path d="M-59.8 -9.4L-32.7 -12.8L-5.7 -9.4L-5.7 -3.8L-32.7 -0.4L-59.8 -3.8Z" fill="#46372a" stroke="#46372a" stroke-width="6.0" stroke-linejoin="round"/><path d="M1.6 -9.4L28.7 -12.8L55.8 -9.4L55.8 -3.8L28.7 -0.4L1.6 -3.8Z" fill="#413226" stroke="#413226" stroke-width="6.0" stroke-linejoin="round"/><path d="M63.0 -9.4L90.1 -12.8L117.1 -9.4L117.1 -3.8L90.1 -0.4L63.0 -3.8Z" fill="#413226" stroke="#413226" stroke-width="6.0" stroke-linejoin="round"/><path d="M124.5 -9.4L151.5 -12.8L178.5 -9.4L178.5 -3.8L151.5 -0.4L124.5 -3.8Z" fill="#4f3f2d" stroke="#4f3f2d" stroke-width="6.0" stroke-linejoin="round"/><path d="M185.8 -9.4L212.9 -12.8L239.9 -9.4L239.9 -3.8L212.9 -0.4L185.8 -3.8Z" fill="#4b3b2b" stroke="#4b3b2b" stroke-width="6.0" stroke-linejoin="round"/><path d="M247.3 -9.4L274.3 -12.8L301.4 -9.4L301.4 -3.8L274.3 -0.4L247.3 -3.8Z" fill="#42342a" stroke="#42342a" stroke-width="6.0" stroke-linejoin="round"/><path d="M-29.1 6.5L-2.0 3.1L25.1 6.5L25.1 12.1L-2.0 15.5L-29.1 12.1Z" fill="#483829" stroke="#483829" stroke-width="6.0" stroke-linejoin="round"/><path d="M32.4 6.5L59.4 3.1L86.4 6.5L86.4 12.1L59.4 15.5L32.3 12.1Z" fill="#483829" stroke="#483829" stroke-width="6.0" stroke-linejoin="round"/><path d="M93.8 6.5L120.8 3.1L147.8 6.5L147.8 12.1L120.8 15.5L93.8 12.1Z" fill="#493a2a" stroke="#493a2a" stroke-width="6.0" stroke-linejoin="round"/><path d="M155.2 6.5L182.2 3.1L209.2 6.5L209.2 12.1L182.2 15.5L155.2 12.1Z" fill="#5b4b3a" stroke="#5b4b3a" stroke-width="6.0" stroke-linejoin="round"/><path d="M216.6 6.5L243.6 3.1L270.7 6.5L270.7 12.1L243.6 15.5L216.6 12.1Z" fill="#493a2a" stroke="#493a2a" stroke-width="6.0" stroke-linejoin="round"/><path d="M277.9 6.5L305.0 3.1L332.1 6.5L332.1 12.1L305.0 15.5L277.9 12.1Z" fill="#46372a" stroke="#46372a" stroke-width="6.0" stroke-linejoin="round"/><path d="M-59.8 22.4L-32.7 19.0L-5.7 22.4L-5.7 28.0L-32.7 31.4L-59.8 28.0Z" fill="#493a2a" stroke="#493a2a" stroke-width="6.0" stroke-linejoin="round"/><path d="M1.6 22.4L28.7 19.0L55.8 22.4L55.8 28.0L28.7 31.4L1.6 28.0Z" fill="#42342a" stroke="#42342a" stroke-width="6.0" stroke-linejoin="round"/><path d="M63.0 22.4L90.1 19.0L117.1 22.4L117.1 28.0L90.1 31.4L63.0 28.0Z" fill="#42342a" stroke="#42342a" stroke-width="6.0" stroke-linejoin="round"/><path d="M124.5 22.4L151.5 19.0L178.5 22.4L178.5 28.0L151.5 31.4L124.5 28.0Z" fill="#42342a" stroke="#42342a" stroke-width="6.0" stroke-linejoin="round"/><path d="M185.8 22.4L212.9 19.0L239.9 22.4L239.9 28.0L212.9 31.4L185.8 28.0Z" fill="#42342a" stroke="#42342a" stroke-width="6.0" stroke-linejoin="round"/><path d="M247.3 22.4L274.3 19.0L301.4 22.4L301.4 28.0L274.3 31.4L247.3 28.0Z" fill="#433428" stroke="#433428" stroke-width="6.0" stroke-linejoin="round"/><path d="M-29.1 38.3L-2.0 34.9L25.1 38.3L25.1 43.9L-2.0 47.3L-29.1 43.9Z" fill="#4c3c2b" stroke="#4c3c2b" stroke-width="6.0" stroke-linejoin="round"/><path d="M32.4 38.3L59.4 34.9L86.4 38.3L86.4 43.9L59.4 47.3L32.3 43.9Z" fill="#4f3f2d" stroke="#4f3f2d" stroke-width="6.0" stroke-linejoin="round"/><path d="M93.8 38.3L120.8 34.9L147.8 38.3L147.8 43.9L120.8 47.3L93.8 43.9Z" fill="#4c3c2b" stroke="#4c3c2b" stroke-width="6.0" stroke-linejoin="round"/><path d="M155.2 38.3L182.2 34.9L209.2 38.3L209.2 43.9L182.2 47.3L155.2 43.9Z" fill="#3c2e23" stroke="#3c2e23" stroke-width="6.0" stroke-linejoin="round"/><path d="M216.6 38.3L243.6 34.9L270.7 38.3L270.7 43.9L243.6 47.3L216.6 43.9Z" fill="#4c3c2b" stroke="#4c3c2b" stroke-width="6.0" stroke-linejoin="round"/><path d="M277.9 38.3L305.0 34.9L332.1 38.3L332.1 43.9L305.0 47.3L277.9 43.9Z" fill="#483829" stroke="#483829" stroke-width="6.0" stroke-linejoin="round"/><path d="M-59.8 54.2L-32.7 50.8L-5.7 54.2L-5.7 59.8L-32.7 63.2L-59.8 59.8Z" fill="#46372a" stroke="#46372a" stroke-width="6.0" stroke-linejoin="round"/><path d="M1.6 54.2L28.7 50.8L55.8 54.2L55.8 59.8L28.7 63.2L1.6 59.8Z" fill="#46372a" stroke="#46372a" stroke-width="6.0" stroke-linejoin="round"/><path d="M63.0 54.2L90.1 50.8L117.1 54.2L117.1 59.8L90.1 63.2L63.0 59.8Z" fill="#4f3f2d" stroke="#4f3f2d" stroke-width="6.0" stroke-linejoin="round"/><path d="M124.5 54.2L151.5 50.8L178.5 54.2L178.5 59.8L151.5 63.2L124.5 59.8Z" fill="#3c2e23" stroke="#3c2e23" stroke-width="6.0" stroke-linejoin="round"/><path d="M185.8 54.2L212.9 50.8L239.9 54.2L239.9 59.8L212.9 63.2L185.8 59.8Z" fill="#4f3f2d" stroke="#4f3f2d" stroke-width="6.0" stroke-linejoin="round"/><path d="M247.3 54.2L274.3 50.8L301.4 54.2L301.4 59.8L274.3 63.2L247.3 59.8Z" fill="#433428" stroke="#433428" stroke-width="6.0" stroke-linejoin="round"/><path d="M-29.1 70.1L-2.0 66.7L25.1 70.1L25.1 75.7L-2.0 79.1L-29.1 75.7Z" fill="#433428" stroke="#433428" stroke-width="6.0" stroke-linejoin="round"/><path d="M32.4 70.1L59.4 66.7L86.4 70.1L86.4 75.7L59.4 79.1L32.3 75.7Z" fill="#4c3c2b" stroke="#4c3c2b" stroke-width="6.0" stroke-linejoin="round"/><path d="M93.8 70.1L120.8 66.7L147.8 70.1L147.8 75.7L120.8 79.1L93.8 75.7Z" fill="#4b3b2b" stroke="#4b3b2b" stroke-width="6.0" stroke-linejoin="round"/><path d="M155.2 70.1L182.2 66.7L209.2 70.1L209.2 75.7L182.2 79.1L155.2 75.7Z" fill="#4c3c2b" stroke="#4c3c2b" stroke-width="6.0" stroke-linejoin="round"/><path d="M216.6 70.1L243.6 66.7L270.7 70.1L270.7 75.7L243.6 79.1L216.6 75.7Z" fill="#4b3b2b" stroke="#4b3b2b" stroke-width="6.0" stroke-linejoin="round"/><path d="M277.9 70.1L305.0 66.7L332.1 70.1L332.1 75.7L305.0 79.1L277.9 75.7Z" fill="#3d2f24" stroke="#3d2f24" stroke-width="6.0" stroke-linejoin="round"/><path d="M-59.8 86.0L-32.7 82.6L-5.7 86.0L-5.7 91.6L-32.7 95.0L-59.8 91.6Z" fill="#3d2f24" stroke="#3d2f24" stroke-width="6.0" stroke-linejoin="round"/><path d="M1.6 86.0L28.7 82.6L55.8 86.0L55.8 91.6L28.7 95.0L1.6 91.6Z" fill="#46372a" stroke="#46372a" stroke-width="6.0" stroke-linejoin="round"/><path d="M63.0 86.0L90.1 82.6L117.1 86.0L117.1 91.6L90.1 95.0L63.0 91.6Z" fill="#46372a" stroke="#46372a" stroke-width="6.0" stroke-linejoin="round"/><path d="M124.5 86.0L151.5 82.6L178.5 86.0L178.5 91.6L151.5 95.0L124.5 91.6Z" fill="#4f3f2d" stroke="#4f3f2d" stroke-width="6.0" stroke-linejoin="round"/><path d="M185.8 86.0L212.9 82.6L239.9 86.0L239.9 91.6L212.9 95.0L185.8 91.6Z" fill="#4b3b2b" stroke="#4b3b2b" stroke-width="6.0" stroke-linejoin="round"/><path d="M247.3 86.0L274.3 82.6L301.4 86.0L301.4 91.6L274.3 95.0L247.3 91.6Z" fill="#4b3b2b" stroke="#4b3b2b" stroke-width="6.0" stroke-linejoin="round"/><path d="M-29.1 101.9L-2.0 98.5L25.1 101.9L25.1 107.5L-2.0 110.9L-29.1 107.5Z" fill="#4c3c2b" stroke="#4c3c2b" stroke-width="6.0" stroke-linejoin="round"/><path d="M32.4 101.9L59.4 98.5L86.4 101.9L86.4 107.5L59.4 110.9L32.3 107.5Z" fill="#4c3c2b" stroke="#4c3c2b" stroke-width="6.0" stroke-linejoin="round"/><path d="M93.8 101.9L120.8 98.5L147.8 101.9L147.8 107.5L120.8 110.9L93.8 107.5Z" fill="#4f3f2d" stroke="#4f3f2d" stroke-width="6.0" stroke-linejoin="round"/><path d="M155.2 101.9L182.2 98.5L209.2 101.9L209.2 107.5L182.2 110.9L155.2 107.5Z" fill="#4c3c2b" stroke="#4c3c2b" stroke-width="6.0" stroke-linejoin="round"/><path d="M216.6 101.9L243.6 98.5L270.7 101.9L270.7 107.5L243.6 110.9L216.6 107.5Z" fill="#42342a" stroke="#42342a" stroke-width="6.0" stroke-linejoin="round"/><path d="M277.9 101.9L305.0 98.5L332.1 101.9L332.1 107.5L305.0 110.9L277.9 107.5Z" fill="#4c3c2b" stroke="#4c3c2b" stroke-width="6.0" stroke-linejoin="round"/><path d="M-59.8 117.8L-32.7 114.4L-5.7 117.8L-5.7 123.4L-32.7 126.8L-59.8 123.4Z" fill="#4b3b2b" stroke="#4b3b2b" stroke-width="6.0" stroke-linejoin="round"/><path d="M1.6 117.8L28.7 114.4L55.8 117.8L55.8 123.4L28.7 126.8L1.6 123.4Z" fill="#3c2e23" stroke="#3c2e23" stroke-width="6.0" stroke-linejoin="round"/><path d="M63.0 117.8L90.1 114.4L117.1 117.8L117.1 123.4L90.1 126.8L63.0 123.4Z" fill="#433428" stroke="#433428" stroke-width="6.0" stroke-linejoin="round"/><path d="M124.5 117.8L151.5 114.4L178.5 117.8L178.5 123.4L151.5 126.8L124.5 123.4Z" fill="#4c3c2b" stroke="#4c3c2b" stroke-width="6.0" stroke-linejoin="round"/><path d="M185.8 117.8L212.9 114.4L239.9 117.8L239.9 123.4L212.9 126.8L185.8 123.4Z" fill="#4f3f2d" stroke="#4f3f2d" stroke-width="6.0" stroke-linejoin="round"/><path d="M247.3 117.8L274.3 114.4L301.4 117.8L301.4 123.4L274.3 126.8L247.3 123.4Z" fill="#493a2a" stroke="#493a2a" stroke-width="6.0" stroke-linejoin="round"/><path d="M-29.1 133.7L-2.0 130.3L25.1 133.7L25.1 139.3L-2.0 142.7L-29.1 139.3Z" fill="#4f3f2d" stroke="#4f3f2d" stroke-width="6.0" stroke-linejoin="round"/><path d="M32.4 133.7L59.4 130.3L86.4 133.7L86.4 139.3L59.4 142.7L32.3 139.3Z" fill="#4f3f2d" stroke="#4f3f2d" stroke-width="6.0" stroke-linejoin="round"/><path d="M93.8 133.7L120.8 130.3L147.8 133.7L147.8 139.3L120.8 142.7L93.8 139.3Z" fill="#3c2e23" stroke="#3c2e23" stroke-width="6.0" stroke-linejoin="round"/><path d="M155.2 133.7L182.2 130.3L209.2 133.7L209.2 139.3L182.2 142.7L155.2 139.3Z" fill="#4b3b2b" stroke="#4b3b2b" stroke-width="6.0" stroke-linejoin="round"/><path d="M216.6 133.7L243.6 130.3L270.7 133.7L270.7 139.3L243.6 142.7L216.6 139.3Z" fill="#433428" stroke="#433428" stroke-width="6.0" stroke-linejoin="round"/><path d="M277.9 133.7L305.0 130.3L332.1 133.7L332.1 139.3L305.0 142.7L277.9 139.3Z" fill="#3c2e23" stroke="#3c2e23" stroke-width="6.0" stroke-linejoin="round"/><rect x="22.7" y="4.2" width="12" height="10.3" fill="#483829"/><rect x="53.4" y="20.1" width="12" height="10.3" fill="#42342a"/><rect x="114.8" y="20.1" width="12" height="10.3" fill="#42342a"/><rect x="53.4" y="83.6" width="12" height="10.3" fill="#46372a"/><rect width="229" height="116" filter="url(#h1n)" opacity=".3"/></svg><div class="plus"><svg width="19" height="19" viewBox="0 0 19 19"><path d="M9.5 4.2v10.6M4.2 9.5h10.600" stroke="#fff" stroke-width="1.600" fill="none"/></svg></div></div><div class="lbl"><span class="nm">Riemchen dunkel</span></div></div><div class="card "><div class="img"><svg class="tx" viewBox="0 0 229 116" preserveAspectRatio="none"><defs><filter id="h2n" x="0" y="0" width="100%" height="100%" color-interpolation-filters="sRGB"><feTurbulence type="fractalNoise" baseFrequency="0.05 0.25" numOctaves="3" seed="5"/><feColorMatrix type="matrix" values="0 0 0 0 0.16 0 0 0 0 0.12 0 0 0 0 0.09 2.4 0 0 0 -1.0"/></filter></defs><rect width="229" height="116" fill="#d3b897"/><path d="M-59.3 -8.9L-32.7 -12.3L-6.2 -8.9L-6.2 -4.3L-32.7 -0.9L-59.3 -4.3Z" fill="#46372a" stroke="#46372a" stroke-width="6.0" stroke-linejoin="round"/><path d="M2.2 -8.9L28.7 -12.3L55.2 -8.9L55.2 -4.3L28.7 -0.9L2.1 -4.3Z" fill="#413226" stroke="#413226" stroke-width="6.0" stroke-linejoin="round"/><path d="M63.5 -8.9L90.1 -12.3L116.6 -8.9L116.6 -4.3L90.1 -0.9L63.5 -4.3Z" fill="#413226" stroke="#413226" stroke-width="6.0" stroke-linejoin="round"/><path d="M125.0 -8.9L151.5 -12.3L178.0 -8.9L178.0 -4.3L151.5 -0.9L125.0 -4.3Z" fill="#4f3f2d" stroke="#4f3f2d" stroke-width="6.0" stroke-linejoin="round"/><path d="M186.3 -8.9L212.9 -12.3L239.4 -8.9L239.4 -4.3L212.9 -0.9L186.3 -4.3Z" fill="#4b3b2b" stroke="#4b3b2b" stroke-width="6.0" stroke-linejoin="round"/><path d="M247.8 -8.9L274.3 -12.3L300.9 -8.9L300.9 -4.3L274.3 -0.9L247.8 -4.3Z" fill="#42342a" stroke="#42342a" stroke-width="6.0" stroke-linejoin="round"/><path d="M-28.6 7.0L-2.0 3.6L24.6 7.0L24.5 11.6L-2.0 15.0L-28.6 11.6Z" fill="#483829" stroke="#483829" stroke-width="6.0" stroke-linejoin="round"/><path d="M32.9 7.0L59.4 3.6L85.9 7.0L85.9 11.6L59.4 15.0L32.8 11.6Z" fill="#483829" stroke="#483829" stroke-width="6.0" stroke-linejoin="round"/><path d="M94.2 7.0L120.8 3.6L147.3 7.0L147.3 11.6L120.8 15.0L94.2 11.6Z" fill="#493a2a" stroke="#493a2a" stroke-width="6.0" stroke-linejoin="round"/><path d="M155.7 7.0L182.2 3.6L208.7 7.0L208.7 11.6L182.2 15.0L155.7 11.6Z" fill="#5b4b3a" stroke="#5b4b3a" stroke-width="6.0" stroke-linejoin="round"/><path d="M217.1 7.0L243.6 3.6L270.2 7.0L270.2 11.6L243.6 15.0L217.1 11.6Z" fill="#493a2a" stroke="#493a2a" stroke-width="6.0" stroke-linejoin="round"/><path d="M278.4 7.0L305.0 3.6L331.6 7.0L331.6 11.6L305.0 15.0L278.4 11.6Z" fill="#46372a" stroke="#46372a" stroke-width="6.0" stroke-linejoin="round"/><path d="M-59.3 22.9L-32.7 19.5L-6.2 22.9L-6.2 27.5L-32.7 30.9L-59.3 27.5Z" fill="#493a2a" stroke="#493a2a" stroke-width="6.0" stroke-linejoin="round"/><path d="M2.2 22.9L28.7 19.5L55.2 22.9L55.2 27.5L28.7 30.9L2.1 27.5Z" fill="#42342a" stroke="#42342a" stroke-width="6.0" stroke-linejoin="round"/><path d="M63.5 22.9L90.1 19.5L116.6 22.9L116.6 27.5L90.1 30.9L63.5 27.5Z" fill="#42342a" stroke="#42342a" stroke-width="6.0" stroke-linejoin="round"/><path d="M125.0 22.9L151.5 19.5L178.0 22.9L178.0 27.5L151.5 30.9L125.0 27.5Z" fill="#42342a" stroke="#42342a" stroke-width="6.0" stroke-linejoin="round"/><path d="M186.3 22.9L212.9 19.5L239.4 22.9L239.4 27.5L212.9 30.9L186.3 27.5Z" fill="#42342a" stroke="#42342a" stroke-width="6.0" stroke-linejoin="round"/><path d="M247.8 22.9L274.3 19.5L300.9 22.9L300.9 27.5L274.3 30.9L247.8 27.5Z" fill="#433428" stroke="#433428" stroke-width="6.0" stroke-linejoin="round"/><path d="M-28.6 38.8L-2.0 35.4L24.6 38.8L24.5 43.4L-2.0 46.8L-28.6 43.4Z" fill="#4c3c2b" stroke="#4c3c2b" stroke-width="6.0" stroke-linejoin="round"/><path d="M32.9 38.8L59.4 35.4L85.9 38.8L85.9 43.4L59.4 46.8L32.8 43.4Z" fill="#4f3f2d" stroke="#4f3f2d" stroke-width="6.0" stroke-linejoin="round"/><path d="M94.2 38.8L120.8 35.4L147.3 38.8L147.3 43.4L120.8 46.8L94.2 43.4Z" fill="#4c3c2b" stroke="#4c3c2b" stroke-width="6.0" stroke-linejoin="round"/><path d="M155.7 38.8L182.2 35.4L208.7 38.8L208.7 43.4L182.2 46.8L155.7 43.4Z" fill="#3c2e23" stroke="#3c2e23" stroke-width="6.0" stroke-linejoin="round"/><path d="M217.1 38.8L243.6 35.4L270.2 38.8L270.2 43.4L243.6 46.8L217.1 43.4Z" fill="#4c3c2b" stroke="#4c3c2b" stroke-width="6.0" stroke-linejoin="round"/><path d="M278.4 38.8L305.0 35.4L331.6 38.8L331.6 43.4L305.0 46.8L278.4 43.4Z" fill="#483829" stroke="#483829" stroke-width="6.0" stroke-linejoin="round"/><path d="M-59.3 54.7L-32.7 51.3L-6.2 54.7L-6.2 59.3L-32.7 62.7L-59.3 59.3Z" fill="#46372a" stroke="#46372a" stroke-width="6.0" stroke-linejoin="round"/><path d="M2.2 54.7L28.7 51.3L55.2 54.7L55.2 59.3L28.7 62.7L2.1 59.3Z" fill="#46372a" stroke="#46372a" stroke-width="6.0" stroke-linejoin="round"/><path d="M63.5 54.7L90.1 51.3L116.6 54.7L116.6 59.3L90.1 62.7L63.5 59.3Z" fill="#4f3f2d" stroke="#4f3f2d" stroke-width="6.0" stroke-linejoin="round"/><path d="M125.0 54.7L151.5 51.3L178.0 54.7L178.0 59.3L151.5 62.7L125.0 59.3Z" fill="#3c2e23" stroke="#3c2e23" stroke-width="6.0" stroke-linejoin="round"/><path d="M186.3 54.7L212.9 51.3L239.4 54.7L239.4 59.3L212.9 62.7L186.3 59.3Z" fill="#4f3f2d" stroke="#4f3f2d" stroke-width="6.0" stroke-linejoin="round"/><path d="M247.8 54.7L274.3 51.3L300.9 54.7L300.9 59.3L274.3 62.7L247.8 59.3Z" fill="#433428" stroke="#433428" stroke-width="6.0" stroke-linejoin="round"/><path d="M-28.6 70.6L-2.0 67.2L24.6 70.6L24.5 75.2L-2.0 78.6L-28.6 75.2Z" fill="#433428" stroke="#433428" stroke-width="6.0" stroke-linejoin="round"/><path d="M32.9 70.6L59.4 67.2L85.9 70.6L85.9 75.2L59.4 78.6L32.8 75.2Z" fill="#4c3c2b" stroke="#4c3c2b" stroke-width="6.0" stroke-linejoin="round"/><path d="M94.2 70.6L120.8 67.2L147.3 70.6L147.3 75.2L120.8 78.6L94.2 75.2Z" fill="#4b3b2b" stroke="#4b3b2b" stroke-width="6.0" stroke-linejoin="round"/><path d="M155.7 70.6L182.2 67.2L208.7 70.6L208.7 75.2L182.2 78.6L155.7 75.2Z" fill="#4c3c2b" stroke="#4c3c2b" stroke-width="6.0" stroke-linejoin="round"/><path d="M217.1 70.6L243.6 67.2L270.2 70.6L270.2 75.2L243.6 78.6L217.1 75.2Z" fill="#4b3b2b" stroke="#4b3b2b" stroke-width="6.0" stroke-linejoin="round"/><path d="M278.4 70.6L305.0 67.2L331.6 70.6L331.6 75.2L305.0 78.6L278.4 75.2Z" fill="#3d2f24" stroke="#3d2f24" stroke-width="6.0" stroke-linejoin="round"/><path d="M-59.3 86.5L-32.7 83.1L-6.2 86.5L-6.2 91.1L-32.7 94.5L-59.3 91.1Z" fill="#3d2f24" stroke="#3d2f24" stroke-width="6.0" stroke-linejoin="round"/><path d="M2.2 86.5L28.7 83.1L55.2 86.5L55.2 91.1L28.7 94.5L2.1 91.1Z" fill="#46372a" stroke="#46372a" stroke-width="6.0" stroke-linejoin="round"/><path d="M63.5 86.5L90.1 83.1L116.6 86.5L116.6 91.1L90.1 94.5L63.5 91.1Z" fill="#46372a" stroke="#46372a" stroke-width="6.0" stroke-linejoin="round"/><path d="M125.0 86.5L151.5 83.1L178.0 86.5L178.0 91.1L151.5 94.5L125.0 91.1Z" fill="#4f3f2d" stroke="#4f3f2d" stroke-width="6.0" stroke-linejoin="round"/><path d="M186.3 86.5L212.9 83.1L239.4 86.5L239.4 91.1L212.9 94.5L186.3 91.1Z" fill="#4b3b2b" stroke="#4b3b2b" stroke-width="6.0" stroke-linejoin="round"/><path d="M247.8 86.5L274.3 83.1L300.9 86.5L300.9 91.1L274.3 94.5L247.8 91.1Z" fill="#4b3b2b" stroke="#4b3b2b" stroke-width="6.0" stroke-linejoin="round"/><path d="M-28.6 102.4L-2.0 99.0L24.6 102.4L24.5 107.0L-2.0 110.4L-28.6 107.0Z" fill="#4c3c2b" stroke="#4c3c2b" stroke-width="6.0" stroke-linejoin="round"/><path d="M32.9 102.4L59.4 99.0L85.9 102.4L85.9 107.0L59.4 110.4L32.8 107.0Z" fill="#4c3c2b" stroke="#4c3c2b" stroke-width="6.0" stroke-linejoin="round"/><path d="M94.2 102.4L120.8 99.0L147.3 102.4L147.3 107.0L120.8 110.4L94.2 107.0Z" fill="#4f3f2d" stroke="#4f3f2d" stroke-width="6.0" stroke-linejoin="round"/><path d="M155.7 102.4L182.2 99.0L208.7 102.4L208.7 107.0L182.2 110.4L155.7 107.0Z" fill="#4c3c2b" stroke="#4c3c2b" stroke-width="6.0" stroke-linejoin="round"/><path d="M217.1 102.4L243.6 99.0L270.2 102.4L270.2 107.0L243.6 110.4L217.1 107.0Z" fill="#42342a" stroke="#42342a" stroke-width="6.0" stroke-linejoin="round"/><path d="M278.4 102.4L305.0 99.0L331.6 102.4L331.6 107.0L305.0 110.4L278.4 107.0Z" fill="#4c3c2b" stroke="#4c3c2b" stroke-width="6.0" stroke-linejoin="round"/><path d="M-59.3 118.3L-32.7 114.9L-6.2 118.3L-6.2 122.9L-32.7 126.3L-59.3 122.9Z" fill="#4b3b2b" stroke="#4b3b2b" stroke-width="6.0" stroke-linejoin="round"/><path d="M2.2 118.3L28.7 114.9L55.2 118.3L55.2 122.9L28.7 126.3L2.1 122.9Z" fill="#3c2e23" stroke="#3c2e23" stroke-width="6.0" stroke-linejoin="round"/><path d="M63.5 118.3L90.1 114.9L116.6 118.3L116.6 122.9L90.1 126.3L63.5 122.9Z" fill="#433428" stroke="#433428" stroke-width="6.0" stroke-linejoin="round"/><path d="M125.0 118.3L151.5 114.9L178.0 118.3L178.0 122.9L151.5 126.3L125.0 122.9Z" fill="#4c3c2b" stroke="#4c3c2b" stroke-width="6.0" stroke-linejoin="round"/><path d="M186.3 118.3L212.9 114.9L239.4 118.3L239.4 122.9L212.9 126.3L186.3 122.9Z" fill="#4f3f2d" stroke="#4f3f2d" stroke-width="6.0" stroke-linejoin="round"/><path d="M247.8 118.3L274.3 114.9L300.9 118.3L300.9 122.9L274.3 126.3L247.8 122.9Z" fill="#493a2a" stroke="#493a2a" stroke-width="6.0" stroke-linejoin="round"/><path d="M-28.6 134.2L-2.0 130.8L24.6 134.2L24.5 138.8L-2.0 142.2L-28.6 138.8Z" fill="#4f3f2d" stroke="#4f3f2d" stroke-width="6.0" stroke-linejoin="round"/><path d="M32.9 134.2L59.4 130.8L85.9 134.2L85.9 138.8L59.4 142.2L32.8 138.8Z" fill="#4f3f2d" stroke="#4f3f2d" stroke-width="6.0" stroke-linejoin="round"/><path d="M94.2 134.2L120.8 130.8L147.3 134.2L147.3 138.8L120.8 142.2L94.2 138.8Z" fill="#3c2e23" stroke="#3c2e23" stroke-width="6.0" stroke-linejoin="round"/><path d="M155.7 134.2L182.2 130.8L208.7 134.2L208.7 138.8L182.2 142.2L155.7 138.8Z" fill="#4b3b2b" stroke="#4b3b2b" stroke-width="6.0" stroke-linejoin="round"/><path d="M217.1 134.2L243.6 130.8L270.2 134.2L270.2 138.8L243.6 142.2L217.1 138.8Z" fill="#433428" stroke="#433428" stroke-width="6.0" stroke-linejoin="round"/><path d="M278.4 134.2L305.0 130.8L331.6 134.2L331.6 138.8L305.0 142.2L278.4 138.8Z" fill="#3c2e23" stroke="#3c2e23" stroke-width="6.0" stroke-linejoin="round"/><rect x="22.7" y="4.7" width="12" height="9.3" fill="#483829"/><rect x="53.4" y="20.6" width="12" height="9.3" fill="#42342a"/><rect x="114.8" y="20.6" width="12" height="9.3" fill="#42342a"/><rect x="53.4" y="84.1" width="12" height="9.3" fill="#46372a"/><rect width="229" height="116" filter="url(#h2n)" opacity=".3"/></svg><div class="plus"><svg width="19" height="19" viewBox="0 0 19 19"><path d="M9.5 4.2v10.6M4.2 9.5h10.600" stroke="#fff" stroke-width="1.600" fill="none"/></svg></div></div><div class="lbl"><span class="nm">Riemchen hell</span></div></div><div class="card "><div class="img"><svg class="tx" viewBox="0 0 229 116" preserveAspectRatio="none"><defs><filter id="h3n" x="0" y="0" width="100%" height="100%" color-interpolation-filters="sRGB"><feTurbulence type="fractalNoise" baseFrequency="0.05 0.25" numOctaves="3" seed="5"/><feColorMatrix type="matrix" values="0 0 0 0 0.16 0 0 0 0 0.12 0 0 0 0 0.09 2.4 0 0 0 -1.0"/></filter></defs><rect width="229" height="116" fill="#a08768"/><path d="M-59.4 -9.0L-32.7 -12.4L-6.1 -9.0L-6.1 -4.2L-32.7 -0.8L-59.4 -4.2Z" fill="#46372a" stroke="#46372a" stroke-width="6.0" stroke-linejoin="round"/><path d="M2.0 -9.0L28.7 -12.4L55.4 -9.0L55.4 -4.2L28.7 -0.8L2.0 -4.2Z" fill="#413226" stroke="#413226" stroke-width="6.0" stroke-linejoin="round"/><path d="M63.4 -9.0L90.1 -12.4L116.8 -9.0L116.8 -4.2L90.1 -0.8L63.4 -4.2Z" fill="#413226" stroke="#413226" stroke-width="6.0" stroke-linejoin="round"/><path d="M124.8 -9.0L151.5 -12.4L178.1 -9.0L178.1 -4.2L151.5 -0.8L124.8 -4.2Z" fill="#4f3f2d" stroke="#4f3f2d" stroke-width="6.0" stroke-linejoin="round"/><path d="M186.2 -9.0L212.9 -12.4L239.5 -9.0L239.5 -4.2L212.9 -0.8L186.2 -4.2Z" fill="#4b3b2b" stroke="#4b3b2b" stroke-width="6.0" stroke-linejoin="round"/><path d="M247.7 -9.0L274.3 -12.4L300.9 -9.0L300.9 -4.2L274.3 -0.8L247.7 -4.2Z" fill="#42342a" stroke="#42342a" stroke-width="6.0" stroke-linejoin="round"/><path d="M-28.7 6.9L-2.0 3.5L24.7 6.9L24.6 11.7L-2.0 15.1L-28.7 11.7Z" fill="#483829" stroke="#483829" stroke-width="6.0" stroke-linejoin="round"/><path d="M32.8 6.9L59.4 3.5L86.0 6.9L86.0 11.7L59.4 15.1L32.8 11.7Z" fill="#483829" stroke="#483829" stroke-width="6.0" stroke-linejoin="round"/><path d="M94.1 6.9L120.8 3.5L147.4 6.9L147.4 11.7L120.8 15.1L94.1 11.7Z" fill="#493a2a" stroke="#493a2a" stroke-width="6.0" stroke-linejoin="round"/><path d="M155.6 6.9L182.2 3.5L208.8 6.9L208.8 11.7L182.2 15.1L155.6 11.7Z" fill="#5b4b3a" stroke="#5b4b3a" stroke-width="6.0" stroke-linejoin="round"/><path d="M217.0 6.9L243.6 3.5L270.2 6.9L270.2 11.7L243.6 15.1L217.0 11.7Z" fill="#493a2a" stroke="#493a2a" stroke-width="6.0" stroke-linejoin="round"/><path d="M278.4 6.9L305.0 3.5L331.6 6.9L331.6 11.7L305.0 15.1L278.4 11.7Z" fill="#46372a" stroke="#46372a" stroke-width="6.0" stroke-linejoin="round"/><path d="M-59.4 22.8L-32.7 19.4L-6.1 22.8L-6.1 27.6L-32.7 31.0L-59.4 27.6Z" fill="#493a2a" stroke="#493a2a" stroke-width="6.0" stroke-linejoin="round"/><path d="M2.0 22.8L28.7 19.4L55.4 22.8L55.4 27.6L28.7 31.0L2.0 27.6Z" fill="#42342a" stroke="#42342a" stroke-width="6.0" stroke-linejoin="round"/><path d="M63.4 22.8L90.1 19.4L116.8 22.8L116.8 27.6L90.1 31.0L63.4 27.6Z" fill="#42342a" stroke="#42342a" stroke-width="6.0" stroke-linejoin="round"/><path d="M124.8 22.8L151.5 19.4L178.1 22.8L178.1 27.6L151.5 31.0L124.8 27.6Z" fill="#42342a" stroke="#42342a" stroke-width="6.0" stroke-linejoin="round"/><path d="M186.2 22.8L212.9 19.4L239.5 22.8L239.5 27.6L212.9 31.0L186.2 27.6Z" fill="#42342a" stroke="#42342a" stroke-width="6.0" stroke-linejoin="round"/><path d="M247.7 22.8L274.3 19.4L300.9 22.8L300.9 27.6L274.3 31.0L247.7 27.6Z" fill="#433428" stroke="#433428" stroke-width="6.0" stroke-linejoin="round"/><path d="M-28.7 38.7L-2.0 35.3L24.7 38.7L24.6 43.5L-2.0 46.9L-28.7 43.5Z" fill="#4c3c2b" stroke="#4c3c2b" stroke-width="6.0" stroke-linejoin="round"/><path d="M32.8 38.7L59.4 35.3L86.0 38.7L86.0 43.5L59.4 46.9L32.8 43.5Z" fill="#4f3f2d" stroke="#4f3f2d" stroke-width="6.0" stroke-linejoin="round"/><path d="M94.1 38.7L120.8 35.3L147.4 38.7L147.4 43.5L120.8 46.9L94.1 43.5Z" fill="#4c3c2b" stroke="#4c3c2b" stroke-width="6.0" stroke-linejoin="round"/><path d="M155.6 38.7L182.2 35.3L208.8 38.7L208.8 43.5L182.2 46.9L155.6 43.5Z" fill="#3c2e23" stroke="#3c2e23" stroke-width="6.0" stroke-linejoin="round"/><path d="M217.0 38.7L243.6 35.3L270.2 38.7L270.2 43.5L243.6 46.9L217.0 43.5Z" fill="#4c3c2b" stroke="#4c3c2b" stroke-width="6.0" stroke-linejoin="round"/><path d="M278.4 38.7L305.0 35.3L331.6 38.7L331.6 43.5L305.0 46.9L278.4 43.5Z" fill="#483829" stroke="#483829" stroke-width="6.0" stroke-linejoin="round"/><path d="M-59.4 54.6L-32.7 51.2L-6.1 54.6L-6.1 59.4L-32.7 62.8L-59.4 59.4Z" fill="#46372a" stroke="#46372a" stroke-width="6.0" stroke-linejoin="round"/><path d="M2.0 54.6L28.7 51.2L55.4 54.6L55.4 59.4L28.7 62.8L2.1 59.4Z" fill="#46372a" stroke="#46372a" stroke-width="6.0" stroke-linejoin="round"/><path d="M63.4 54.6L90.1 51.2L116.8 54.6L116.8 59.4L90.1 62.8L63.4 59.4Z" fill="#4f3f2d" stroke="#4f3f2d" stroke-width="6.0" stroke-linejoin="round"/><path d="M124.8 54.6L151.5 51.2L178.1 54.6L178.1 59.4L151.5 62.8L124.8 59.4Z" fill="#3c2e23" stroke="#3c2e23" stroke-width="6.0" stroke-linejoin="round"/><path d="M186.2 54.6L212.9 51.2L239.5 54.6L239.5 59.4L212.9 62.8L186.2 59.4Z" fill="#4f3f2d" stroke="#4f3f2d" stroke-width="6.0" stroke-linejoin="round"/><path d="M247.7 54.6L274.3 51.2L300.9 54.6L300.9 59.4L274.3 62.8L247.7 59.4Z" fill="#433428" stroke="#433428" stroke-width="6.0" stroke-linejoin="round"/><path d="M-28.7 70.5L-2.0 67.1L24.7 70.5L24.6 75.3L-2.0 78.7L-28.7 75.3Z" fill="#433428" stroke="#433428" stroke-width="6.0" stroke-linejoin="round"/><path d="M32.8 70.5L59.4 67.1L86.0 70.5L86.0 75.3L59.4 78.7L32.8 75.3Z" fill="#4c3c2b" stroke="#4c3c2b" stroke-width="6.0" stroke-linejoin="round"/><path d="M94.1 70.5L120.8 67.1L147.4 70.5L147.4 75.3L120.8 78.7L94.1 75.3Z" fill="#4b3b2b" stroke="#4b3b2b" stroke-width="6.0" stroke-linejoin="round"/><path d="M155.6 70.5L182.2 67.1L208.8 70.5L208.8 75.3L182.2 78.7L155.6 75.3Z" fill="#4c3c2b" stroke="#4c3c2b" stroke-width="6.0" stroke-linejoin="round"/><path d="M217.0 70.5L243.6 67.1L270.2 70.5L270.2 75.3L243.6 78.7L217.0 75.3Z" fill="#4b3b2b" stroke="#4b3b2b" stroke-width="6.0" stroke-linejoin="round"/><path d="M278.4 70.5L305.0 67.1L331.6 70.5L331.6 75.3L305.0 78.7L278.4 75.3Z" fill="#3d2f24" stroke="#3d2f24" stroke-width="6.0" stroke-linejoin="round"/><path d="M-59.4 86.4L-32.7 83.0L-6.1 86.4L-6.1 91.2L-32.7 94.6L-59.4 91.2Z" fill="#3d2f24" stroke="#3d2f24" stroke-width="6.0" stroke-linejoin="round"/><path d="M2.0 86.4L28.7 83.0L55.4 86.4L55.4 91.2L28.7 94.6L2.1 91.2Z" fill="#46372a" stroke="#46372a" stroke-width="6.0" stroke-linejoin="round"/><path d="M63.4 86.4L90.1 83.0L116.8 86.4L116.8 91.2L90.1 94.6L63.4 91.2Z" fill="#46372a" stroke="#46372a" stroke-width="6.0" stroke-linejoin="round"/><path d="M124.8 86.4L151.5 83.0L178.1 86.4L178.1 91.2L151.5 94.6L124.8 91.2Z" fill="#4f3f2d" stroke="#4f3f2d" stroke-width="6.0" stroke-linejoin="round"/><path d="M186.2 86.4L212.9 83.0L239.5 86.4L239.5 91.2L212.9 94.6L186.2 91.2Z" fill="#4b3b2b" stroke="#4b3b2b" stroke-width="6.0" stroke-linejoin="round"/><path d="M247.7 86.4L274.3 83.0L300.9 86.4L300.9 91.2L274.3 94.6L247.7 91.2Z" fill="#4b3b2b" stroke="#4b3b2b" stroke-width="6.0" stroke-linejoin="round"/><path d="M-28.7 102.3L-2.0 98.9L24.6 102.3L24.6 107.1L-2.0 110.5L-28.7 107.1Z" fill="#4c3c2b" stroke="#4c3c2b" stroke-width="6.0" stroke-linejoin="round"/><path d="M32.8 102.3L59.4 98.9L86.0 102.3L86.0 107.1L59.4 110.5L32.8 107.1Z" fill="#4c3c2b" stroke="#4c3c2b" stroke-width="6.0" stroke-linejoin="round"/><path d="M94.1 102.3L120.8 98.9L147.4 102.3L147.4 107.1L120.8 110.5L94.1 107.1Z" fill="#4f3f2d" stroke="#4f3f2d" stroke-width="6.0" stroke-linejoin="round"/><path d="M155.6 102.3L182.2 98.9L208.8 102.3L208.8 107.1L182.2 110.5L155.6 107.1Z" fill="#4c3c2b" stroke="#4c3c2b" stroke-width="6.0" stroke-linejoin="round"/><path d="M217.0 102.3L243.6 98.9L270.2 102.3L270.2 107.1L243.6 110.5L217.0 107.1Z" fill="#42342a" stroke="#42342a" stroke-width="6.0" stroke-linejoin="round"/><path d="M278.4 102.3L305.0 98.9L331.6 102.3L331.6 107.1L305.0 110.5L278.4 107.1Z" fill="#4c3c2b" stroke="#4c3c2b" stroke-width="6.0" stroke-linejoin="round"/><path d="M-59.4 118.2L-32.7 114.8L-6.1 118.2L-6.1 123.0L-32.7 126.4L-59.4 123.0Z" fill="#4b3b2b" stroke="#4b3b2b" stroke-width="6.0" stroke-linejoin="round"/><path d="M2.0 118.2L28.7 114.8L55.4 118.2L55.4 123.0L28.7 126.4L2.1 123.0Z" fill="#3c2e23" stroke="#3c2e23" stroke-width="6.0" stroke-linejoin="round"/><path d="M63.4 118.2L90.1 114.8L116.8 118.2L116.8 123.0L90.1 126.4L63.4 123.0Z" fill="#433428" stroke="#433428" stroke-width="6.0" stroke-linejoin="round"/><path d="M124.8 118.2L151.5 114.8L178.1 118.2L178.1 123.0L151.5 126.4L124.8 123.0Z" fill="#4c3c2b" stroke="#4c3c2b" stroke-width="6.0" stroke-linejoin="round"/><path d="M186.2 118.2L212.9 114.8L239.5 118.2L239.5 123.0L212.9 126.4L186.2 123.0Z" fill="#4f3f2d" stroke="#4f3f2d" stroke-width="6.0" stroke-linejoin="round"/><path d="M247.7 118.2L274.3 114.8L300.9 118.2L300.9 123.0L274.3 126.4L247.7 123.0Z" fill="#493a2a" stroke="#493a2a" stroke-width="6.0" stroke-linejoin="round"/><path d="M-28.7 134.1L-2.0 130.7L24.6 134.1L24.6 138.9L-2.0 142.3L-28.7 138.9Z" fill="#4f3f2d" stroke="#4f3f2d" stroke-width="6.0" stroke-linejoin="round"/><path d="M32.8 134.1L59.4 130.7L86.0 134.1L86.0 138.9L59.4 142.3L32.8 138.9Z" fill="#4f3f2d" stroke="#4f3f2d" stroke-width="6.0" stroke-linejoin="round"/><path d="M94.1 134.1L120.8 130.7L147.4 134.1L147.4 138.9L120.8 142.3L94.1 138.9Z" fill="#3c2e23" stroke="#3c2e23" stroke-width="6.0" stroke-linejoin="round"/><path d="M155.6 134.1L182.2 130.7L208.8 134.1L208.8 138.9L182.2 142.3L155.6 138.9Z" fill="#4b3b2b" stroke="#4b3b2b" stroke-width="6.0" stroke-linejoin="round"/><path d="M217.0 134.1L243.6 130.7L270.2 134.1L270.2 138.9L243.6 142.3L217.0 138.9Z" fill="#433428" stroke="#433428" stroke-width="6.0" stroke-linejoin="round"/><path d="M278.4 134.1L305.0 130.7L331.6 134.1L331.6 138.9L305.0 142.3L278.4 138.9Z" fill="#3c2e23" stroke="#3c2e23" stroke-width="6.0" stroke-linejoin="round"/><rect x="22.7" y="4.6" width="12" height="9.5" fill="#483829"/><rect x="53.4" y="20.5" width="12" height="9.5" fill="#42342a"/><rect x="114.8" y="20.5" width="12" height="9.5" fill="#42342a"/><rect x="53.4" y="84.0" width="12" height="9.5" fill="#46372a"/><rect width="229" height="116" filter="url(#h3n)" opacity=".3"/></svg><div class="plus"><svg width="19" height="19" viewBox="0 0 19 19"><path d="M9.5 4.2v10.6M4.2 9.5h10.600" stroke="#fff" stroke-width="1.600" fill="none"/></svg></div></div><div class="lbl"><span class="nm">Riemchen beige</span></div></div></div></div>
  <div class="sb"><div class="th"></div>
    <svg style="top:2.7px" width="11" height="6" viewBox="0 0 11 6"><path d="M2.6 4.6 5.5 1.6 8.4 4.6Z" fill="#fff"/></svg>
    <svg style="top:711.8px" width="11" height="6" viewBox="0 0 11 6"><path d="M2.6 1.4 5.5 4.4 8.4 1.4Z" fill="#fff"/></svg>
  </div>
</div></div>
</body>
</html>
